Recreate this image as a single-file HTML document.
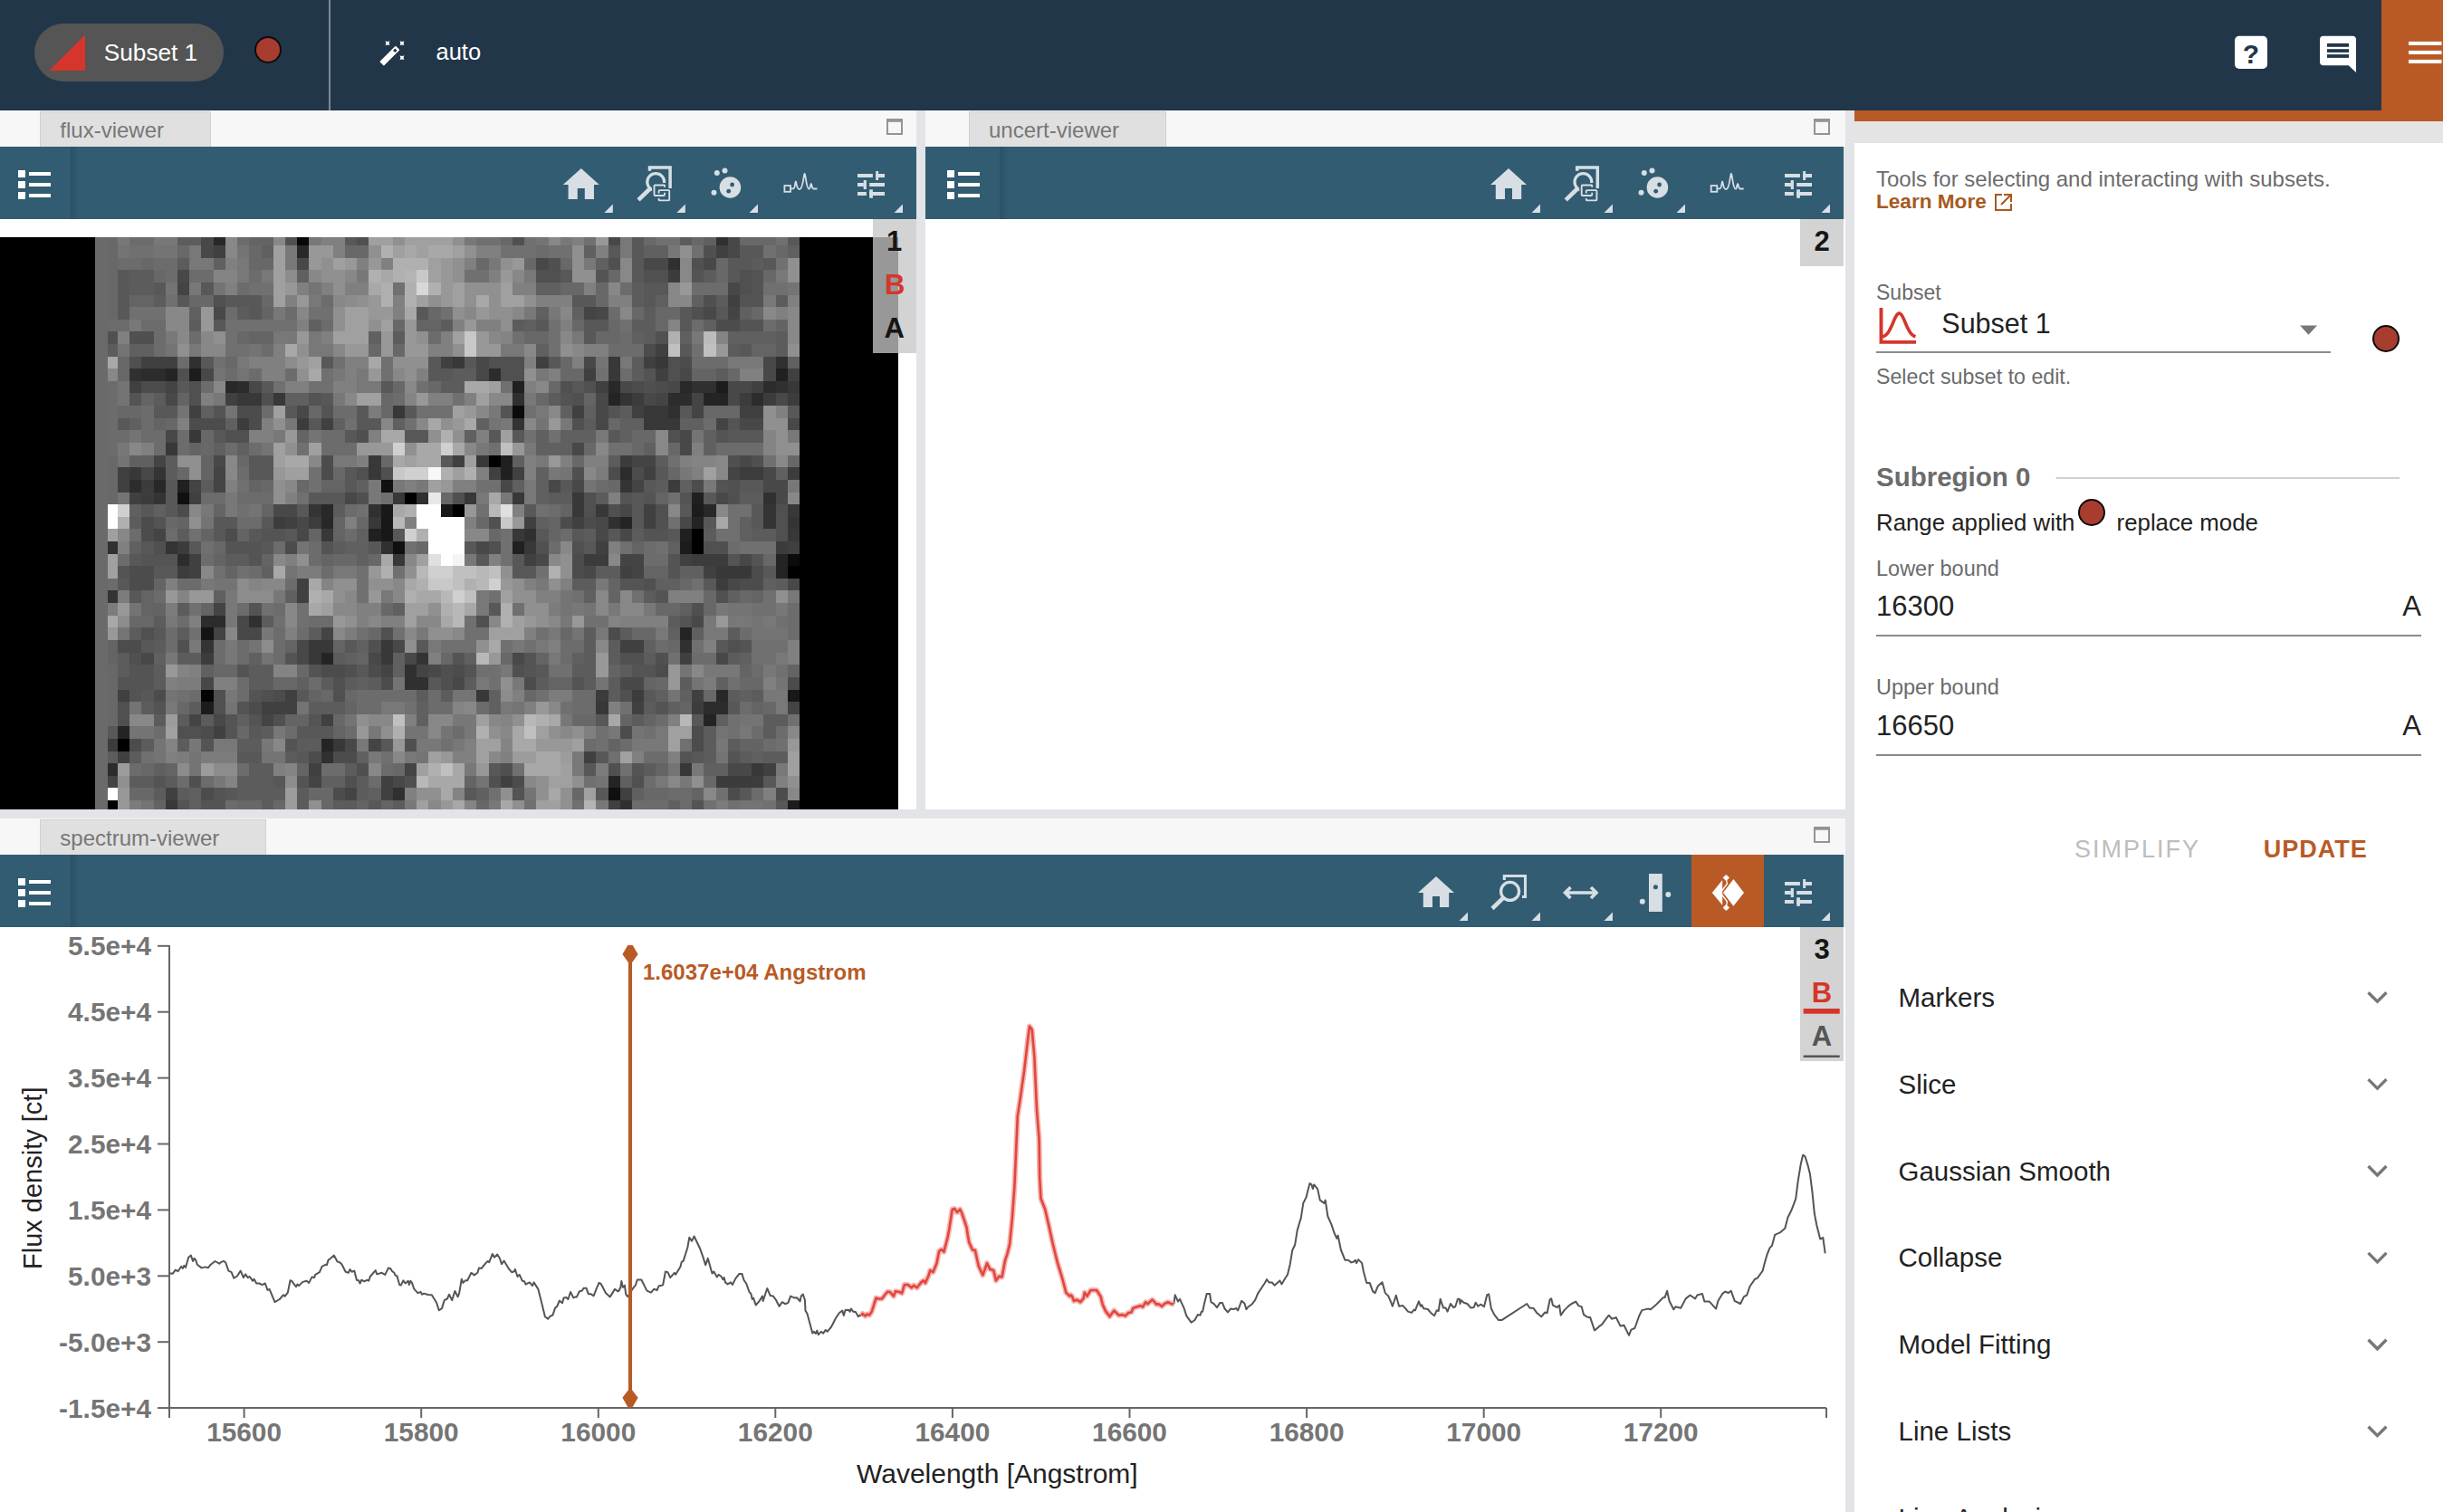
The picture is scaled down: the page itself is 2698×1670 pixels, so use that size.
<!DOCTYPE html>
<html><head><meta charset="utf-8">
<style>
*{margin:0;padding:0;box-sizing:border-box}
html,body{width:2698px;height:1670px;overflow:hidden;background:#fff;font-family:"Liberation Sans",sans-serif}
.a{position:absolute}
.tabrow{background:#f7f7f7}
.tab{background:#e0e0e0;border:1px solid #d0d0d0;border-bottom:none}
.tb{background:#315c72}
.gap{background:#e2e4e8}
.shadow{width:9px;height:80px;background:linear-gradient(to right,rgba(0,0,0,0.13),rgba(0,0,0,0))}
svg text{font-family:"Liberation Sans",sans-serif}
</style></head><body>

<!-- top bar -->
<div class="a" style="left:0;top:0;width:2698px;height:122px;background:#22364a"></div>
<div class="a" style="left:38px;top:26px;width:209px;height:64px;border-radius:32px;background:#555"></div>
<div class="a" style="left:281px;top:39.5px;width:30px;height:30px;border-radius:50%;background:#a83c2e;border:2px solid #0c0c0c"></div>
<div class="a" style="left:363px;top:0;width:2px;height:122px;background:#7b8896"></div>
<div class="a" style="left:2630px;top:0;width:68px;height:122px;background:#b95a26"></div>
<div class="a" style="left:2048px;top:122px;width:650px;height:12px;background:#b95a26"></div>

<!-- viewers background -->
<div class="a gap" style="left:0;top:122px;width:2048px;height:1548px"></div>

<!-- flux viewer -->
<div class="a tabrow" style="left:0;top:122px;width:1012px;height:40px"></div>
<div class="a tab" style="left:44px;top:122.5px;width:189px;height:39.5px"></div>
<div class="a tb" style="left:0;top:162px;width:1012px;height:80px"></div>
<div class="a shadow" style="left:78px;top:162px"></div>
<div class="a" style="left:0;top:242px;width:1012px;height:652px;background:#fff"></div>
<div class="a" style="left:0;top:262px;width:992px;height:632px;background:#000"></div>
<svg class="a" style="left:105px;top:262px" width="778" height="632" shape-rendering="crispEdges">
<rect x="0" y="0" width="14" height="632" fill="#6a6a6a"/>
<path fill="#000000" d="M435 241h13v13h-13zM342 282h13v13h-13zM395 295h13v14h-13zM659 322h13v14h-13zM659 336h13v14h-13zM765 363h13v14h-13zM25 554h13v14h-13zM14 622h11v10h-11z"/>
<path fill="#040404" d="M117 500h14v13h-14z"/>
<path fill="#080808" d="M223 0h13v9h-13z"/>
<path fill="#0c0c0c" d="M461 186h13v14h-13zM765 350h13v13h-13z"/>
<path fill="#101010" d="M316 268h13v14h-13zM91 282h13v13h-13zM329 336h13v14h-13zM567 608h13v14h-13z"/>
<path fill="#141414" d="M117 431h14v14h-14z"/>
<path fill="#181818" d="M316 295h13v14h-13zM382 295h13v14h-13zM316 309h13v13h-13zM316 322h13v14h-13zM765 500h13v13h-13z"/>
<path fill="#1c1c1c" d="M104 145h13v14h-13zM686 159h13v13h-13zM659 295h13v14h-13zM646 336h13v14h-13zM117 513h14v14h-14zM765 622h13v10h-13z"/>
<path fill="#202020" d="M752 145h13v14h-13zM461 159h13v13h-13zM448 241h13v13h-13zM448 254h13v14h-13zM91 268h13v14h-13zM659 282h13v13h-13zM302 322h14v14h-14zM646 322h13v14h-13zM461 336h13v14h-13z"/>
<path fill="#242424" d="M78 145h13v14h-13zM567 172h13v14h-13zM672 172h14v14h-14zM686 172h13v14h-13zM580 309h13v13h-13zM659 309h13v13h-13zM752 350h13v13h-13zM752 363h13v14h-13zM646 431h13v14h-13zM250 459h13v13h-13zM672 527h14v13h-14zM25 540h13v14h-13zM250 554h13v14h-13zM567 595h13v13h-13z"/>
<path fill="#282828" d="M131 0h13v9h-13zM223 9h13v14h-13zM144 159h13v13h-13zM567 159h13v13h-13zM646 159h13v13h-13zM65 268h13v14h-13zM250 295h13v14h-13zM672 295h14v14h-14zM250 309h13v13h-13zM686 500h13v13h-13z"/>
<path fill="#2c2c2c" d="M51 145h14v14h-14zM65 145h13v14h-13zM435 145h13v14h-13zM157 159h13v13h-13zM738 159h14v13h-14zM633 172h13v14h-13zM646 172h13v14h-13zM725 172h13v14h-13zM580 254h13v14h-13zM38 268h13v14h-13zM91 350h13v13h-13zM117 418h14v13h-14zM131 418h13v13h-13zM672 513h14v14h-14zM686 513h13v14h-13zM14 581h11v14h-11z"/>
<path fill="#303030" d="M686 0h13v9h-13zM633 23h13v13h-13zM104 132h13v13h-13zM752 132h13v13h-13zM38 145h13v14h-13zM659 159h13v13h-13zM672 159h14v13h-14zM752 159h13v13h-13zM461 172h13v14h-13zM633 186h13v14h-13zM355 282h13v13h-13zM738 282h14v13h-14zM302 295h14v14h-14zM567 309h13v13h-13zM474 322h13v14h-13zM14 336h11v14h-11zM316 336h13v14h-13zM170 418h14v13h-14zM646 445h13v14h-13zM342 472h13v14h-13zM342 486h13v14h-13zM355 486h13v14h-13zM250 568h13v13h-13zM329 608h13v14h-13zM580 622h13v10h-13z"/>
<path fill="#343434" d="M580 172h13v14h-13zM461 200h13v13h-13zM65 254h13v14h-13zM580 268h13v14h-13zM65 282h13v13h-13zM236 295h14v14h-14zM738 295h14v14h-14zM738 309h14v13h-14zM765 309h13v13h-13zM78 336h13v14h-13zM14 390h11v14h-11zM117 445h14v14h-14zM355 459h13v13h-13z"/>
<path fill="#383838" d="M395 132h13v13h-13zM567 132h13v13h-13zM619 132h14v13h-14zM567 145h13v14h-13zM765 159h13v13h-13zM157 172h13v14h-13zM170 172h14v14h-14zM197 172h13v14h-13zM329 186h13v14h-13zM606 186h13v14h-13zM619 186h14v14h-14zM606 200h13v13h-13zM619 200h14v13h-14zM633 200h13v13h-13zM104 213h13v14h-13zM78 227h13v14h-13zM302 241h14v13h-14zM421 241h14v13h-14zM38 254h13v14h-13zM302 254h14v14h-14zM329 282h13v13h-13zM408 282h13v13h-13zM461 282h13v13h-13zM527 282h13v13h-13zM527 295h13v14h-13zM553 295h14v14h-14zM765 295h13v14h-13zM302 309h14v13h-14zM250 322h13v14h-13zM461 322h13v14h-13zM765 322h13v14h-13zM474 336h13v14h-13zM329 350h13v13h-13zM686 363h13v14h-13zM699 363h13v14h-13zM712 363h13v14h-13zM236 445h14v14h-14zM250 445h13v14h-13zM316 445h13v14h-13zM236 459h14v13h-14zM316 459h13v13h-13zM421 500h14v13h-14zM553 513h14v14h-14zM263 554h13v14h-13zM646 581h13v14h-13zM725 581h13v14h-13zM78 622h13v10h-13z"/>
<path fill="#3c3c3c" d="M633 36h13v14h-13zM593 172h13v14h-13zM712 172h13v14h-13zM738 172h14v14h-14zM765 172h13v14h-13zM157 200h13v13h-13zM223 200h13v13h-13zM580 241h13v13h-13zM712 254h13v14h-13zM725 254h13v14h-13zM765 254h13v14h-13zM51 268h14v14h-14zM633 268h13v14h-13zM51 282h14v13h-14zM197 309h13v13h-13zM236 309h14v13h-14zM91 336h13v14h-13zM752 336h13v14h-13zM540 350h13v13h-13zM553 350h14v13h-14zM659 350h13v13h-13zM672 350h14v13h-14zM686 350h13v13h-13zM91 363h13v14h-13zM686 377h13v13h-13zM117 459h14v13h-14zM553 500h14v13h-14zM593 500h13v13h-13zM659 513h13v14h-13zM14 554h11v14h-11zM686 595h13v13h-13zM699 595h13v13h-13zM712 595h13v13h-13zM725 595h13v13h-13z"/>
<path fill="#404040" d="M131 9h13v14h-13zM686 9h13v14h-13zM699 64h13v13h-13zM619 118h14v14h-14zM51 132h14v13h-14zM65 132h13v13h-13zM78 132h13v13h-13zM382 132h13v13h-13zM487 132h14v13h-14zM606 132h13v13h-13zM540 145h13v14h-13zM619 145h14v14h-14zM765 145h13v14h-13zM38 159h13v13h-13zM553 159h14v13h-14zM725 159h13v13h-13zM144 172h13v14h-13zM104 186h13v14h-13zM527 186h13v14h-13zM593 186h13v14h-13zM712 186h13v14h-13zM725 186h13v14h-13zM250 200h13v13h-13zM395 241h13v13h-13zM25 254h13v14h-13zM435 254h13v14h-13zM461 254h13v14h-13zM606 254h13v14h-13zM25 268h13v14h-13zM38 282h13v13h-13zM104 282h13v13h-13zM606 295h13v14h-13zM210 309h13v13h-13zM474 309h13v13h-13zM527 309h13v13h-13zM606 309h13v13h-13zM553 336h14v14h-14zM765 336h13v14h-13zM104 350h13v13h-13zM474 350h13v13h-13zM646 350h13v13h-13zM104 363h13v14h-13zM580 363h13v14h-13zM672 363h14v14h-14zM223 377h13v13h-13zM223 390h13v14h-13zM580 445h13v14h-13zM593 445h13v14h-13zM646 459h13v13h-13zM25 500h13v13h-13zM210 500h13v13h-13zM659 500h13v13h-13zM184 513h13v14h-13zM197 513h13v14h-13zM210 513h13v14h-13zM593 513h13v14h-13zM250 527h13v13h-13zM131 540h13v14h-13zM25 568h13v13h-13zM540 568h13v13h-13zM236 581h14v14h-14zM738 581h14v14h-14zM316 595h13v13h-13zM448 595h13v13h-13zM78 608h13v14h-13zM316 608h13v14h-13zM580 608h13v14h-13zM567 622h13v10h-13z"/>
<path fill="#444444" d="M91 50h13v14h-13zM540 77h13v14h-13zM699 77h13v14h-13zM78 159h13v13h-13zM619 172h14v14h-14zM659 172h13v14h-13zM659 186h13v14h-13zM686 200h13v13h-13zM65 241h13v13h-13zM593 241h13v13h-13zM606 241h13v13h-13zM131 254h13v14h-13zM699 254h13v14h-13zM104 268h13v14h-13zM131 268h13v14h-13zM593 268h13v14h-13zM65 322h13v14h-13zM580 350h13v13h-13zM593 350h13v13h-13zM593 363h13v14h-13zM131 404h13v14h-13zM131 431h13v14h-13zM250 431h13v14h-13zM316 472h13v14h-13zM355 472h13v14h-13zM765 513h13v14h-13zM104 527h13v13h-13zM184 527h13v13h-13zM302 554h14v14h-14zM342 581h13v14h-13zM14 595h11v13h-11zM236 595h14v13h-14zM276 608h13v14h-13z"/>
<path fill="#484848" d="M117 0h14v9h-14zM567 0h13v9h-13zM699 0h13v9h-13zM117 9h14v14h-14zM699 9h13v14h-13zM223 23h13v13h-13zM487 23h14v13h-14zM606 23h13v13h-13zM619 23h14v13h-14zM672 23h14v13h-14zM91 36h13v14h-13zM699 50h13v14h-13zM131 77h13v14h-13zM553 77h14v14h-14zM672 77h14v14h-14zM421 132h14v13h-14zM540 132h13v13h-13zM738 132h14v13h-14zM117 145h14v14h-14zM421 145h14v14h-14zM646 145h13v14h-13zM738 145h14v14h-14zM170 159h14v13h-14zM580 159h13v13h-13zM633 159h13v13h-13zM699 159h13v13h-13zM712 159h13v13h-13zM78 172h13v14h-13zM553 172h14v14h-14zM606 172h13v14h-13zM699 172h13v14h-13zM752 172h13v14h-13zM223 186h13v14h-13zM553 186h14v14h-14zM553 200h14v13h-14zM712 200h13v13h-13zM725 200h13v13h-13zM765 200h13v13h-13zM78 213h13v14h-13zM646 213h13v14h-13zM527 227h13v14h-13zM646 227h13v14h-13zM131 241h13v13h-13zM712 241h13v13h-13zM51 254h14v14h-14zM738 254h14v14h-14zM448 268h13v14h-13zM501 268h13v14h-13zM527 268h13v14h-13zM738 268h14v14h-14zM752 268h13v14h-13zM276 282h13v13h-13zM686 282h13v13h-13zM752 282h13v13h-13zM197 295h13v14h-13zM210 295h13v14h-13zM580 295h13v14h-13zM223 309h13v13h-13zM553 309h14v13h-14zM646 309h13v13h-13zM223 322h13v14h-13zM553 322h14v14h-14zM580 322h13v14h-13zM421 336h14v14h-14zM487 350h14v13h-14zM712 350h13v13h-13zM540 363h13v14h-13zM699 377h13v13h-13zM765 377h13v13h-13zM157 418h13v13h-13zM659 418h13v13h-13zM157 431h13v14h-13zM170 431h14v14h-14zM223 445h13v14h-13zM329 445h13v14h-13zM51 459h14v13h-14zM223 459h13v13h-13zM302 459h14v13h-14zM342 459h13v13h-13zM461 459h13v13h-13zM686 459h13v13h-13zM368 472h14v14h-14zM117 486h14v14h-14zM395 486h13v14h-13zM580 486h13v14h-13zM593 486h13v14h-13zM131 527h13v13h-13zM276 554h13v14h-13zM699 581h13v14h-13zM712 581h13v14h-13zM329 595h13v13h-13z"/>
<path fill="#4c4c4c" d="M686 91h13v13h-13zM699 91h13v13h-13zM606 118h13v14h-13zM646 132h13v13h-13zM51 159h14v13h-14zM65 159h13v13h-13zM593 159h13v13h-13zM619 159h14v13h-14zM157 186h13v14h-13zM170 186h14v14h-14zM104 200h13v13h-13zM117 200h14v13h-14zM131 200h13v13h-13zM170 200h14v13h-14zM250 241h13v13h-13zM250 254h13v14h-13zM567 254h13v14h-13zM593 254h13v14h-13zM659 268h13v14h-13zM91 295h13v14h-13zM51 309h14v13h-14zM514 309h13v13h-13zM540 309h13v13h-13zM51 322h14v14h-14zM144 322h13v14h-13zM210 336h13v14h-13zM527 350h13v13h-13zM38 363h13v14h-13zM51 363h14v14h-14zM527 363h13v14h-13zM725 363h13v14h-13zM38 377h13v13h-13zM51 377h14v13h-14zM712 377h13v13h-13zM725 377h13v13h-13zM567 431h13v14h-13zM25 445h13v14h-13zM38 445h13v14h-13zM250 472h13v14h-13zM263 472h13v14h-13zM302 472h14v14h-14zM395 472h13v14h-13zM619 472h14v14h-14zM316 486h13v14h-13zM474 486h13v14h-13zM765 486h13v14h-13zM65 500h13v13h-13zM197 500h13v13h-13zM170 513h14v14h-14zM117 540h14v14h-14zM580 540h13v14h-13zM659 540h13v14h-13zM38 554h13v14h-13zM659 554h13v14h-13zM236 568h14v13h-14zM263 568h13v13h-13zM276 568h13v13h-13zM461 595h13v13h-13zM117 608h14v14h-14zM263 608h13v14h-13zM699 608h13v14h-13zM752 608h13v14h-13z"/>
<path fill="#505050" d="M210 0h13v9h-13zM289 0h13v9h-13zM461 0h13v9h-13zM672 9h14v14h-14zM501 23h13v13h-13zM567 23h13v13h-13zM659 23h13v13h-13zM487 36h14v14h-14zM501 36h13v14h-13zM606 36h13v14h-13zM619 36h14v14h-14zM712 36h13v14h-13zM712 50h13v14h-13zM131 64h13v13h-13zM672 64h14v13h-14zM659 77h13v14h-13zM14 104h11v14h-11zM38 104h13v14h-13zM51 104h14v14h-14zM619 104h14v14h-14zM38 132h13v13h-13zM435 132h13v13h-13zM448 132h13v13h-13zM461 132h13v13h-13zM633 132h13v13h-13zM91 145h13v14h-13zM448 145h13v14h-13zM461 145h13v14h-13zM633 145h13v14h-13zM104 159h13v13h-13zM514 159h13v13h-13zM540 159h13v13h-13zM606 159h13v13h-13zM104 172h13v14h-13zM184 172h13v14h-13zM527 172h13v14h-13zM527 200h13v13h-13zM144 213h13v14h-13zM157 213h13v14h-13zM289 213h13v14h-13zM633 213h13v14h-13zM699 241h13v13h-13zM725 241h13v13h-13zM289 254h13v14h-13zM316 254h13v14h-13zM527 254h13v14h-13zM699 268h13v14h-13zM289 282h13v13h-13zM395 282h13v13h-13zM540 282h13v13h-13zM699 282h13v13h-13zM540 295h13v14h-13zM567 295h13v14h-13zM619 295h14v14h-14zM752 295h13v14h-13zM435 309h13v13h-13zM619 309h14v13h-14zM752 309h13v13h-13zM752 322h13v14h-13zM65 336h13v14h-13zM435 336h13v14h-13zM487 336h14v14h-14zM527 336h13v14h-13zM672 336h14v14h-14zM686 336h13v14h-13zM606 377h13v13h-13zM686 390h13v14h-13zM659 404h13v14h-13zM421 418h14v13h-14zM51 431h14v14h-14zM316 431h13v14h-13zM91 445h13v14h-13zM302 445h14v14h-14zM699 445h13v14h-13zM38 459h13v13h-13zM580 459h13v13h-13zM593 459h13v13h-13zM619 459h14v13h-14zM276 472h13v14h-13zM382 472h13v14h-13zM461 472h13v14h-13zM263 486h13v14h-13zM382 486h13v14h-13zM131 500h13v13h-13zM184 500h13v13h-13zM263 500h13v13h-13zM580 500h13v13h-13zM25 513h13v14h-13zM131 513h13v14h-13zM25 527h13v13h-13zM197 527h13v13h-13zM91 540h13v14h-13zM104 540h13v14h-13zM342 554h13v14h-13zM289 581h13v14h-13zM448 581h13v14h-13zM567 581h13v14h-13zM104 595h13v13h-13zM276 595h13v13h-13zM342 595h13v13h-13zM435 595h13v13h-13zM593 595h13v13h-13z"/>
<path fill="#545454" d="M553 36h14v14h-14zM659 36h13v14h-13zM725 36h13v14h-13zM725 50h13v14h-13zM712 64h13v13h-13zM725 64h13v13h-13zM712 91h13v13h-13zM725 91h13v13h-13zM606 145h13v14h-13zM38 172h13v14h-13zM236 172h14v14h-14zM514 172h13v14h-13zM131 186h13v14h-13zM250 186h13v14h-13zM448 186h13v14h-13zM567 186h13v14h-13zM699 200h13v13h-13zM686 213h13v14h-13zM686 268h13v14h-13zM580 282h13v13h-13zM606 282h13v13h-13zM646 282h13v13h-13zM65 309h13v13h-13zM184 322h13v14h-13zM197 322h13v14h-13zM606 322h13v14h-13zM619 322h14v14h-14zM144 336h13v14h-13zM157 336h13v14h-13zM170 336h14v14h-14zM250 336h13v14h-13zM51 350h14v13h-14zM65 350h13v13h-13zM78 350h13v13h-13zM170 350h14v13h-14zM633 350h13v13h-13zM699 350h13v13h-13zM725 350h13v13h-13zM25 363h13v14h-13zM633 363h13v14h-13zM580 377h13v13h-13zM593 377h13v13h-13zM619 390h14v14h-14zM170 404h14v14h-14zM646 418h13v13h-13zM712 445h13v14h-13zM210 459h13v13h-13zM395 459h13v13h-13zM474 459h13v13h-13zM38 472h13v14h-13zM51 472h14v14h-14zM157 472h13v14h-13zM236 472h14v14h-14zM408 472h13v14h-13zM474 472h13v14h-13zM593 472h13v14h-13zM606 472h13v14h-13zM25 486h13v14h-13zM38 486h13v14h-13zM51 486h14v14h-14zM527 486h13v14h-13zM38 500h13v13h-13zM170 500h14v13h-14zM65 513h13v14h-13zM157 513h13v14h-13zM619 513h14v14h-14zM144 527h13v13h-13zM170 527h14v13h-14zM236 527h14v13h-14zM144 540h13v14h-13zM117 554h14v14h-14zM210 554h13v14h-13zM646 568h13v13h-13zM699 568h13v13h-13zM593 581h13v14h-13zM65 595h13v13h-13zM223 595h13v13h-13zM131 608h13v14h-13zM461 608h13v14h-13zM91 622h13v10h-13zM117 622h14v10h-14zM131 622h13v10h-13zM659 622h13v10h-13z"/>
<path fill="#585858" d="M276 0h13v9h-13zM593 0h13v9h-13zM765 0h13v9h-13zM567 9h13v14h-13zM593 9h13v14h-13zM712 9h13v14h-13zM725 9h13v14h-13zM593 23h13v13h-13zM699 23h13v13h-13zM712 23h13v13h-13zM738 23h14v13h-14zM25 36h13v14h-13zM514 36h13v14h-13zM593 36h13v14h-13zM699 36h13v14h-13zM25 50h13v14h-13zM65 50h13v14h-13zM117 50h14v14h-14zM606 50h13v14h-13zM619 50h14v14h-14zM25 64h13v13h-13zM91 64h13v13h-13zM144 64h13v13h-13zM157 64h13v13h-13zM170 64h14v13h-14zM527 64h13v13h-13zM540 64h13v13h-13zM606 64h13v13h-13zM25 77h13v14h-13zM170 77h14v14h-14zM355 77h13v14h-13zM646 77h13v14h-13zM686 77h13v14h-13zM131 91h13v13h-13zM487 91h14v13h-14zM540 91h13v13h-13zM553 91h14v13h-14zM646 91h13v13h-13zM540 104h13v14h-13zM646 118h13v14h-13zM712 118h13v14h-13zM117 132h14v13h-14zM250 132h13v13h-13zM368 132h14v13h-14zM408 132h13v13h-13zM501 132h13v13h-13zM368 145h14v14h-14zM382 145h13v14h-13zM91 159h13v13h-13zM184 159h13v13h-13zM316 159h13v13h-13zM527 159h13v13h-13zM250 172h13v14h-13zM65 186h13v14h-13zM78 186h13v14h-13zM210 186h13v14h-13zM289 186h13v14h-13zM342 186h13v14h-13zM646 186h13v14h-13zM765 186h13v14h-13zM25 200h13v13h-13zM236 200h14v13h-14zM289 200h13v13h-13zM302 200h14v13h-14zM131 213h13v14h-13zM276 213h13v14h-13zM342 213h13v14h-13zM355 213h13v14h-13zM435 213h13v14h-13zM461 213h13v14h-13zM567 213h13v14h-13zM699 213h13v14h-13zM712 213h13v14h-13zM725 213h13v14h-13zM170 241h14v13h-14zM184 241h13v13h-13zM382 241h13v13h-13zM170 254h14v14h-14zM184 254h13v14h-13zM276 254h13v14h-13zM619 254h14v14h-14zM78 268h13v14h-13zM276 268h13v14h-13zM514 268h13v14h-13zM606 268h13v14h-13zM712 268h13v14h-13zM725 268h13v14h-13zM78 282h13v13h-13zM236 282h14v13h-14zM250 282h13v13h-13zM263 282h13v13h-13zM593 282h13v13h-13zM672 282h14v13h-14zM51 295h14v14h-14zM78 295h13v14h-13zM223 295h13v14h-13zM474 295h13v14h-13zM593 295h13v14h-13zM646 295h13v14h-13zM725 295h13v14h-13zM131 309h13v13h-13zM144 309h13v13h-13zM184 309h13v13h-13zM593 309h13v13h-13zM672 309h14v13h-14zM725 309h13v13h-13zM131 322h13v14h-13zM170 322h14v14h-14zM210 322h13v14h-13zM329 322h13v14h-13zM487 322h14v14h-14zM527 322h13v14h-13zM567 322h13v14h-13zM633 322h13v14h-13zM51 336h14v14h-14zM104 336h13v14h-13zM184 336h13v14h-13zM302 336h14v14h-14zM408 336h13v14h-13zM540 336h13v14h-13zM38 350h13v13h-13zM421 350h14v13h-14zM461 350h13v13h-13zM65 363h13v14h-13zM78 363h13v14h-13zM461 363h13v14h-13zM474 363h13v14h-13zM738 363h14v14h-14zM25 377h13v13h-13zM672 377h14v13h-14zM38 390h13v14h-13zM435 404h13v14h-13zM65 431h13v14h-13zM51 445h14v14h-14zM276 445h13v14h-13zM355 445h13v14h-13zM686 445h13v14h-13zM289 472h13v14h-13zM487 472h14v14h-14zM368 486h14v14h-14zM51 500h14v13h-14zM223 500h13v13h-13zM606 500h13v13h-13zM699 513h13v14h-13zM553 527h14v13h-14zM659 527h13v13h-13zM14 540h11v14h-11zM170 540h14v14h-14zM223 540h13v14h-13zM236 540h14v14h-14zM250 540h13v14h-13zM316 554h13v14h-13zM157 568h13v13h-13zM170 568h14v13h-14zM223 568h13v13h-13zM553 568h14v13h-14zM659 568h13v13h-13zM435 581h13v14h-13zM540 581h13v14h-13zM197 595h13v13h-13zM738 595h14v13h-14zM144 608h13v14h-13zM408 608h13v14h-13zM553 608h14v14h-14zM712 608h13v14h-13zM302 622h14v10h-14zM752 622h13v10h-13z"/>
<path fill="#5c5c5c" d="M91 0h13v9h-13zM104 0h13v9h-13zM646 0h13v9h-13zM91 23h13v13h-13zM725 23h13v13h-13zM38 36h13v14h-13zM51 36h14v14h-14zM672 36h14v14h-14zM38 50h13v14h-13zM51 50h14v14h-14zM593 50h13v14h-13zM65 64h13v13h-13zM593 64h13v13h-13zM686 64h13v13h-13zM752 64h13v13h-13zM157 77h13v14h-13zM606 77h13v14h-13zM104 91h13v13h-13zM382 91h13v13h-13zM461 91h13v13h-13zM593 91h13v13h-13zM606 91h13v13h-13zM329 104h13v14h-13zM606 104h13v14h-13zM752 104h13v14h-13zM14 118h11v14h-11zM699 118h13v14h-13zM752 118h13v14h-13zM593 132h13v13h-13zM395 145h13v14h-13zM408 145h13v14h-13zM593 145h13v14h-13zM686 145h13v14h-13zM382 159h13v13h-13zM395 159h13v13h-13zM65 172h13v14h-13zM501 172h13v14h-13zM580 186h13v14h-13zM540 200h13v13h-13zM78 241h13v13h-13zM567 241h13v13h-13zM619 241h14v13h-14zM78 254h13v14h-13zM117 268h14v14h-14zM619 268h14v14h-14zM501 282h13v13h-13zM514 282h13v13h-13zM553 282h14v13h-14zM712 282h13v13h-13zM725 282h13v13h-13zM263 295h13v14h-13zM38 309h13v13h-13zM91 322h13v14h-13zM540 322h13v14h-13zM593 322h13v14h-13zM672 322h14v14h-14zM725 322h13v14h-13zM738 322h14v14h-14zM263 336h13v14h-13zM144 350h13v13h-13zM157 350h13v13h-13zM553 363h14v14h-14zM567 363h13v14h-13zM527 377h13v13h-13zM540 377h13v13h-13zM752 377h13v13h-13zM606 390h13v14h-13zM91 404h13v14h-13zM65 418h13v13h-13zM184 418h13v13h-13zM633 418h13v13h-13zM38 431h13v14h-13zM91 431h13v14h-13zM236 431h14v14h-14zM540 431h13v14h-13zM580 431h13v14h-13zM699 431h13v14h-13zM65 445h13v14h-13zM540 445h13v14h-13zM567 445h13v14h-13zM25 459h13v13h-13zM91 459h13v13h-13zM104 459h13v13h-13zM263 459h13v13h-13zM540 459h13v13h-13zM567 459h13v13h-13zM606 459h13v13h-13zM699 459h13v13h-13zM25 472h13v14h-13zM65 472h13v14h-13zM170 472h14v14h-14zM184 472h13v14h-13zM527 472h13v14h-13zM540 472h13v14h-13zM580 472h13v14h-13zM65 486h13v14h-13zM170 486h14v14h-14zM184 486h13v14h-13zM250 486h13v14h-13zM276 486h13v14h-13zM302 486h14v14h-14zM408 486h13v14h-13zM487 486h14v14h-14zM540 486h13v14h-13zM567 486h13v14h-13zM646 486h13v14h-13zM355 500h13v13h-13zM382 500h13v13h-13zM567 500h13v13h-13zM699 500h13v13h-13zM725 500h13v13h-13zM51 513h14v14h-14zM104 513h13v14h-13zM236 513h14v14h-14zM250 513h13v14h-13zM263 513h13v14h-13zM606 513h13v14h-13zM65 527h13v13h-13zM91 527h13v13h-13zM117 527h14v13h-14zM593 527h13v13h-13zM738 527h14v13h-14zM752 527h13v13h-13zM184 540h13v14h-13zM672 540h14v14h-14zM738 540h14v14h-14zM51 554h14v14h-14zM91 554h13v14h-13zM157 554h13v14h-13zM170 554h14v14h-14zM223 554h13v14h-13zM236 554h14v14h-14zM672 554h14v14h-14zM699 554h13v14h-13zM14 568h11v13h-11zM38 568h13v13h-13zM210 568h13v13h-13zM672 568h14v13h-14zM712 568h13v13h-13zM738 568h14v13h-14zM752 568h13v13h-13zM170 581h14v14h-14zM184 581h13v14h-13zM276 581h13v14h-13zM606 581h13v14h-13zM38 595h13v13h-13zM51 595h14v13h-14zM78 595h13v13h-13zM157 595h13v13h-13zM170 595h14v13h-14zM184 595h13v13h-13zM289 595h13v13h-13zM65 608h13v14h-13zM91 608h13v14h-13zM157 608h13v14h-13zM170 608h14v14h-14zM184 608h13v14h-13zM197 608h13v14h-13zM223 608h13v14h-13zM289 608h13v14h-13zM184 622h13v10h-13zM223 622h13v10h-13zM263 622h13v10h-13zM276 622h13v10h-13zM329 622h13v10h-13z"/>
<path fill="#606060" d="M672 0h14v9h-14zM184 9h13v14h-13zM540 9h13v14h-13zM606 9h13v14h-13zM619 9h14v14h-14zM765 9h13v14h-13zM131 23h13v13h-13zM553 23h14v13h-14zM223 36h13v14h-13zM487 50h14v14h-14zM501 50h13v14h-13zM619 64h14v13h-14zM659 64h13v13h-13zM104 77h13v14h-13zM487 77h14v14h-14zM527 77h13v14h-13zM712 77h13v14h-13zM236 91h14v13h-14zM474 91h13v13h-13zM672 91h14v13h-14zM302 104h14v14h-14zM593 104h13v14h-13zM646 104h13v14h-13zM699 104h13v14h-13zM712 104h13v14h-13zM725 104h13v14h-13zM738 104h14v14h-14zM38 118h13v14h-13zM51 118h14v14h-14zM487 118h14v14h-14zM765 132h13v13h-13zM210 172h13v14h-13zM223 172h13v14h-13zM117 186h14v14h-14zM514 186h13v14h-13zM540 186h13v14h-13zM38 200h13v13h-13zM144 200h13v13h-13zM263 200h13v13h-13zM329 200h13v13h-13zM421 200h14v13h-14zM580 200h13v13h-13zM593 200h13v13h-13zM646 200h13v13h-13zM659 200h13v13h-13zM408 213h13v14h-13zM487 213h14v14h-14zM514 213h13v14h-13zM527 213h13v14h-13zM540 213h13v14h-13zM580 213h13v14h-13zM672 213h14v14h-14zM131 227h13v14h-13zM157 227h13v14h-13zM487 227h14v14h-14zM501 227h13v14h-13zM514 227h13v14h-13zM606 227h13v14h-13zM672 227h14v14h-14zM38 241h13v13h-13zM51 241h14v13h-14zM461 241h13v13h-13zM487 254h14v14h-14zM752 254h13v14h-13zM289 268h13v14h-13zM461 268h13v14h-13zM487 268h14v14h-14zM646 268h13v14h-13zM487 282h14v13h-14zM38 295h13v14h-13zM65 295h13v14h-13zM487 309h14v13h-14zM712 309h13v13h-13zM289 322h13v14h-13zM712 322h13v14h-13zM38 336h13v14h-13zM276 336h13v14h-13zM289 336h13v14h-13zM633 336h13v14h-13zM289 350h13v13h-13zM184 363h13v14h-13zM646 363h13v14h-13zM659 363h13v14h-13zM619 377h14v13h-14zM633 377h13v13h-13zM738 377h14v13h-14zM131 390h13v14h-13zM210 390h13v14h-13zM540 390h13v14h-13zM699 390h13v14h-13zM329 404h13v14h-13zM646 404h13v14h-13zM633 431h13v14h-13zM659 431h13v14h-13zM289 445h13v14h-13zM606 445h13v14h-13zM65 459h13v13h-13zM170 459h14v13h-14zM276 459h13v13h-13zM329 459h13v13h-13zM408 459h13v13h-13zM527 459h13v13h-13zM712 459h13v13h-13zM117 472h14v14h-14zM329 472h13v14h-13zM223 486h13v14h-13zM289 486h13v14h-13zM686 486h13v14h-13zM435 500h13v13h-13zM619 500h14v13h-14zM646 500h13v13h-13zM712 500h13v13h-13zM355 513h13v14h-13zM435 513h13v14h-13zM633 513h13v14h-13zM157 527h13v13h-13zM355 527h13v13h-13zM686 527h13v13h-13zM289 568h13v13h-13zM725 568h13v13h-13zM65 581h13v14h-13zM672 581h14v14h-14zM686 581h13v14h-13zM250 595h13v13h-13zM263 595h13v13h-13zM580 595h13v13h-13zM104 608h13v14h-13zM302 608h14v14h-14zM421 608h14v14h-14zM593 608h13v14h-13zM104 622h13v10h-13zM633 622h13v10h-13z"/>
<path fill="#646464" d="M170 0h14v9h-14zM184 0h13v9h-13zM38 64h13v13h-13zM51 64h14v13h-14zM184 77h13v14h-13zM355 91h13v13h-13zM368 91h14v13h-14zM752 91h13v13h-13zM170 104h14v14h-14zM184 104h13v14h-13zM725 118h13v14h-13zM738 118h14v14h-14zM659 145h13v14h-13zM672 145h14v14h-14zM51 172h14v14h-14zM91 172h13v14h-13zM540 172h13v14h-13zM65 200h13v13h-13zM223 213h13v14h-13zM104 227h13v14h-13zM117 241h14v13h-14zM117 254h14v14h-14zM170 268h14v14h-14zM250 268h13v14h-13zM263 268h13v14h-13zM619 282h14v13h-14zM131 295h13v14h-13zM184 295h13v14h-13zM514 295h13v14h-13zM91 309h13v13h-13zM263 309h13v13h-13zM501 309h13v13h-13zM117 322h14v14h-14zM157 322h13v14h-13zM236 322h14v14h-14zM263 322h13v14h-13zM501 322h13v14h-13zM593 336h13v14h-13zM131 350h13v13h-13zM184 350h13v13h-13zM250 350h13v13h-13zM144 363h13v14h-13zM606 363h13v14h-13zM619 363h14v14h-14zM65 377h13v13h-13zM567 377h13v13h-13zM51 390h14v14h-14zM567 390h13v14h-13zM725 390h13v14h-13zM51 404h14v14h-14zM65 404h13v14h-13zM117 404h14v14h-14zM14 445h11v14h-11zM210 445h13v14h-13zM263 445h13v14h-13zM14 459h11v13h-11zM289 459h13v13h-13zM487 459h14v13h-14zM567 472h13v14h-13zM712 472h13v14h-13zM765 472h13v14h-13zM501 486h13v14h-13zM514 486h13v14h-13zM606 486h13v14h-13zM236 500h14v13h-14zM276 513h13v14h-13zM646 513h13v14h-13zM725 513h13v14h-13zM210 527h13v13h-13zM223 527h13v13h-13zM580 527h13v13h-13zM606 527h13v13h-13zM263 540h13v14h-13zM567 554h13v14h-13zM712 554h13v14h-13zM725 554h13v14h-13zM78 581h13v14h-13zM223 581h13v14h-13zM619 581h14v14h-14zM408 595h13v13h-13zM659 608h13v14h-13zM65 622h13v10h-13zM289 622h13v10h-13zM316 622h13v10h-13z"/>
<path fill="#686868" d="M14 0h11v9h-11zM448 0h13v9h-13zM606 0h13v9h-13zM659 0h13v9h-13zM712 0h13v9h-13zM725 0h13v9h-13zM738 0h14v9h-14zM14 9h11v14h-11zM91 9h13v14h-13zM170 9h14v14h-14zM276 9h13v14h-13zM289 9h13v14h-13zM752 9h13v14h-13zM14 23h11v13h-11zM51 23h14v13h-14zM170 23h14v13h-14zM184 23h13v13h-13zM421 23h14v13h-14zM474 23h13v13h-13zM514 23h13v13h-13zM686 23h13v13h-13zM14 36h11v14h-11zM65 36h13v14h-13zM567 36h13v14h-13zM686 36h13v14h-13zM738 36h14v14h-14zM14 50h11v14h-11zM514 50h13v14h-13zM527 50h13v14h-13zM553 50h14v14h-14zM14 64h11v13h-11zM104 64h13v13h-13zM117 64h14v13h-14zM184 64h13v13h-13zM553 64h14v13h-14zM14 77h11v14h-11zM368 77h14v14h-14zM593 77h13v14h-13zM619 77h14v14h-14zM633 77h13v14h-13zM725 77h13v14h-13zM329 91h13v13h-13zM527 91h13v13h-13zM567 91h13v13h-13zM619 91h14v13h-14zM157 104h13v14h-13zM474 104h13v14h-13zM487 104h14v14h-14zM553 104h14v14h-14zM567 104h13v14h-13zM302 118h14v14h-14zM329 118h13v14h-13zM25 132h13v13h-13zM144 132h13v13h-13zM514 132h13v13h-13zM25 145h13v14h-13zM514 145h13v14h-13zM527 145h13v14h-13zM699 145h13v14h-13zM329 159h13v13h-13zM368 159h14v13h-14zM501 159h13v13h-13zM316 172h13v14h-13zM487 172h14v14h-14zM25 186h13v14h-13zM38 186h13v14h-13zM236 186h14v14h-14zM316 186h13v14h-13zM672 186h14v14h-14zM686 186h13v14h-13zM699 186h13v14h-13zM78 200h13v13h-13zM567 200h13v13h-13zM117 213h14v14h-14zM593 213h13v14h-13zM606 213h13v14h-13zM117 227h14v14h-14zM540 227h13v14h-13zM593 227h13v14h-13zM633 227h13v14h-13zM14 241h11v13h-11zM157 241h13v13h-13zM316 241h13v13h-13zM527 241h13v13h-13zM765 241h13v13h-13zM14 254h11v14h-11zM91 254h13v14h-13zM263 254h13v14h-13zM633 254h13v14h-13zM14 268h11v14h-11zM184 268h13v14h-13zM223 268h13v14h-13zM567 268h13v14h-13zM14 282h11v13h-11zM382 282h13v13h-13zM78 309h13v13h-13zM289 309h13v13h-13zM421 309h14v13h-14zM435 322h13v14h-13zM131 336h13v14h-13zM355 336h13v14h-13zM263 350h13v13h-13zM276 350h13v13h-13zM302 350h14v13h-14zM738 350h14v13h-14zM646 377h13v13h-13zM672 390h14v14h-14zM712 390h13v14h-13zM316 404h13v14h-13zM619 404h14v14h-14zM633 404h13v14h-13zM672 404h14v14h-14zM38 418h13v13h-13zM51 418h14v13h-14zM302 431h14v14h-14zM514 431h13v14h-13zM593 431h13v14h-13zM606 431h13v14h-13zM633 445h13v14h-13zM382 459h13v13h-13zM448 459h13v13h-13zM14 472h11v14h-11zM131 472h13v14h-13zM144 472h13v14h-13zM223 472h13v14h-13zM14 486h11v14h-11zM197 486h13v14h-13zM210 486h13v14h-13zM619 486h14v14h-14zM712 486h13v14h-13zM725 486h13v14h-13zM14 500h11v13h-11zM250 500h13v13h-13zM276 500h13v13h-13zM474 500h13v13h-13zM672 500h14v13h-14zM14 513h11v14h-11zM91 513h13v14h-13zM738 513h14v14h-14zM14 527h11v13h-11zM263 527h13v13h-13zM527 527h13v13h-13zM540 527h13v13h-13zM157 540h13v14h-13zM51 581h14v14h-14zM329 581h13v14h-13zM672 595h14v13h-14zM38 608h13v14h-13zM51 608h14v14h-14zM236 608h14v14h-14zM250 608h13v14h-13zM527 608h13v14h-13zM606 608h13v14h-13zM619 608h14v14h-14zM157 622h13v10h-13zM170 622h14v10h-14zM197 622h13v10h-13zM250 622h13v10h-13zM421 622h14v10h-14z"/>
<path fill="#6c6c6c" d="M38 0h13v9h-13zM51 0h14v9h-14zM157 0h13v9h-13zM487 9h14v14h-14zM25 23h13v13h-13zM38 23h13v13h-13zM65 23h13v13h-13zM78 23h13v13h-13zM78 36h13v14h-13zM104 36h13v14h-13zM117 36h14v14h-14zM170 36h14v14h-14zM157 50h13v14h-13zM580 50h13v14h-13zM659 50h13v14h-13zM672 50h14v14h-14zM686 50h13v14h-13zM250 64h13v13h-13zM144 77h13v14h-13zM210 77h13v14h-13zM567 77h13v14h-13zM14 91h11v13h-11zM25 91h13v13h-13zM51 91h14v13h-14zM65 91h13v13h-13zM250 91h13v13h-13zM659 91h13v13h-13zM738 91h14v13h-14zM65 104h13v14h-13zM104 104h13v14h-13zM368 104h14v14h-14zM580 104h13v14h-13zM65 118h13v14h-13zM184 118h13v14h-13zM567 118h13v14h-13zM580 118h13v14h-13zM593 118h13v14h-13zM91 132h13v13h-13zM659 132h13v13h-13zM672 132h14v13h-14zM686 132h13v13h-13zM144 145h13v14h-13zM170 145h14v14h-14zM210 145h13v14h-13zM580 145h13v14h-13zM14 159h11v13h-11zM117 159h14v13h-14zM14 172h11v14h-11zM329 172h13v14h-13zM14 186h11v14h-11zM51 186h14v14h-14zM184 186h13v14h-13zM263 186h13v14h-13zM276 186h13v14h-13zM14 200h11v13h-11zM51 200h14v13h-14zM672 200h14v13h-14zM14 213h11v14h-11zM25 213h13v14h-13zM51 213h14v14h-14zM65 213h13v14h-13zM91 213h13v14h-13zM250 213h13v14h-13zM263 213h13v14h-13zM14 227h11v14h-11zM65 227h13v14h-13zM91 227h13v14h-13zM144 227h13v14h-13zM170 227h14v14h-14zM250 227h13v14h-13zM263 227h13v14h-13zM276 227h13v14h-13zM686 227h13v14h-13zM699 227h13v14h-13zM712 227h13v14h-13zM725 227h13v14h-13zM157 254h13v14h-13zM553 268h14v14h-14zM117 282h14v13h-14zM131 282h13v13h-13zM157 282h13v13h-13zM170 282h14v13h-14zM184 282h13v13h-13zM276 295h13v14h-13zM501 295h13v14h-13zM157 309h13v13h-13zM170 309h14v13h-14zM38 322h13v14h-13zM78 322h13v14h-13zM276 322h13v14h-13zM514 322h13v14h-13zM197 336h13v14h-13zM236 336h14v14h-14zM501 336h13v14h-13zM606 336h13v14h-13zM699 336h13v14h-13zM25 350h13v13h-13zM117 350h14v13h-14zM236 350h14v13h-14zM606 350h13v13h-13zM619 350h14v13h-14zM170 363h14v14h-14zM250 363h13v14h-13zM14 377h11v13h-11zM91 377h13v13h-13zM104 377h13v13h-13zM210 377h13v13h-13zM65 390h13v14h-13zM157 404h13v14h-13zM197 404h13v14h-13zM765 404h13v14h-13zM91 418h13v13h-13zM236 418h14v13h-14zM250 418h13v13h-13zM765 418h13v13h-13zM78 431h13v14h-13zM197 431h13v14h-13zM223 431h13v14h-13zM712 431h13v14h-13zM765 431h13v14h-13zM78 445h13v14h-13zM131 445h13v14h-13zM157 445h13v14h-13zM197 445h13v14h-13zM514 445h13v14h-13zM527 445h13v14h-13zM619 445h14v14h-14zM131 459h13v13h-13zM157 459h13v13h-13zM197 459h13v13h-13zM514 459h13v13h-13zM659 459h13v13h-13zM672 459h14v13h-14zM725 472h13v14h-13zM157 486h13v14h-13zM236 486h14v14h-14zM104 500h13v13h-13zM157 500h13v13h-13zM289 500h13v13h-13zM302 500h14v13h-14zM316 500h13v13h-13zM329 500h13v13h-13zM342 500h13v13h-13zM368 500h14v13h-14zM527 500h13v13h-13zM540 500h13v13h-13zM289 513h13v14h-13zM302 513h14v14h-14zM368 513h14v14h-14zM382 513h13v14h-13zM421 513h14v14h-14zM527 513h13v14h-13zM540 513h13v14h-13zM712 513h13v14h-13zM619 527h14v13h-14zM65 540h13v14h-13zM210 540h13v14h-13zM276 540h13v14h-13zM395 540h13v14h-13zM725 540h13v14h-13zM752 540h13v14h-13zM540 554h13v14h-13zM580 554h13v14h-13zM738 554h14v14h-14zM606 568h13v13h-13zM619 568h14v13h-14zM38 581h13v14h-13zM157 581h13v14h-13zM250 581h13v14h-13zM263 581h13v14h-13zM316 581h13v14h-13zM91 595h13v13h-13zM117 595h14v13h-14zM302 595h14v13h-14zM606 595h13v13h-13zM633 608h13v14h-13zM646 608h13v14h-13zM725 608h13v14h-13zM144 622h13v10h-13zM593 622h13v10h-13zM606 622h13v10h-13zM619 622h14v10h-14zM646 622h13v10h-13z"/>
<path fill="#707070" d="M421 0h14v9h-14zM435 0h13v9h-13zM474 0h13v9h-13zM540 0h13v9h-13zM619 0h14v9h-14zM633 0h13v9h-13zM752 0h13v9h-13zM38 9h13v14h-13zM51 9h14v14h-14zM448 9h13v14h-13zM461 9h13v14h-13zM474 9h13v14h-13zM501 9h13v14h-13zM514 9h13v14h-13zM659 9h13v14h-13zM738 9h14v14h-14zM752 23h13v13h-13zM408 36h13v14h-13zM421 36h14v14h-14zM170 50h14v14h-14zM184 50h13v14h-13zM329 50h13v14h-13zM738 50h14v14h-14zM752 50h13v14h-13zM78 64h13v13h-13zM38 77h13v14h-13zM51 77h14v14h-14zM65 77h13v14h-13zM236 77h14v14h-14zM250 77h13v14h-13zM382 77h13v14h-13zM144 91h13v13h-13zM157 91h13v13h-13zM170 91h14v13h-14zM184 91h13v13h-13zM197 91h13v13h-13zM210 91h13v13h-13zM501 91h13v13h-13zM580 91h13v13h-13zM144 104h13v14h-13zM461 104h13v14h-13zM501 104h13v14h-13zM144 118h13v14h-13zM157 118h13v14h-13zM501 118h13v14h-13zM659 118h13v14h-13zM131 132h13v13h-13zM263 132h13v13h-13zM316 132h13v13h-13zM250 145h13v14h-13zM316 145h13v14h-13zM553 145h14v14h-14zM197 159h13v13h-13zM236 159h14v13h-14zM250 159h13v13h-13zM355 159h13v13h-13zM448 159h13v13h-13zM395 172h13v14h-13zM355 186h13v14h-13zM368 186h14v14h-14zM382 186h13v14h-13zM474 186h13v14h-13zM276 200h13v13h-13zM342 200h13v13h-13zM474 213h13v14h-13zM501 213h13v14h-13zM223 227h13v14h-13zM435 227h13v14h-13zM567 227h13v14h-13zM580 227h13v14h-13zM633 241h13v13h-13zM738 241h14v13h-14zM236 254h14v14h-14zM157 268h13v14h-13zM236 268h14v14h-14zM421 268h14v14h-14zM435 268h13v14h-13zM223 282h13v13h-13zM316 282h13v13h-13zM633 282h13v13h-13zM157 295h13v14h-13zM289 295h13v14h-13zM421 295h14v14h-14zM487 295h14v14h-14zM699 295h13v14h-13zM712 295h13v14h-13zM633 309h13v13h-13zM699 309h13v13h-13zM104 322h13v14h-13zM448 322h13v14h-13zM686 322h13v14h-13zM699 322h13v14h-13zM117 336h14v14h-14zM342 336h13v14h-13zM448 336h13v14h-13zM580 336h13v14h-13zM619 336h14v14h-14zM712 336h13v14h-13zM725 336h13v14h-13zM738 336h14v14h-14zM448 350h13v13h-13zM131 363h13v14h-13zM157 363h13v14h-13zM289 363h13v14h-13zM329 363h13v14h-13zM487 363h14v14h-14zM289 377h13v13h-13zM659 377h13v13h-13zM289 390h13v14h-13zM435 390h13v14h-13zM527 390h13v14h-13zM593 390h13v14h-13zM738 390h14v14h-14zM104 404h13v14h-13zM184 404h13v14h-13zM223 404h13v14h-13zM461 404h13v14h-13zM725 404h13v14h-13zM738 404h14v14h-14zM197 418h13v13h-13zM223 418h13v13h-13zM408 418h13v13h-13zM540 418h13v13h-13zM553 418h14v13h-14zM752 418h13v13h-13zM104 431h13v14h-13zM289 431h13v14h-13zM329 431h13v14h-13zM408 431h13v14h-13zM421 431h14v14h-14zM487 431h14v14h-14zM382 445h13v14h-13zM395 445h13v14h-13zM408 445h13v14h-13zM448 445h13v14h-13zM474 445h13v14h-13zM659 445h13v14h-13zM725 445h13v14h-13zM738 445h14v14h-14zM752 445h13v14h-13zM633 459h13v13h-13zM725 459h13v13h-13zM738 459h14v13h-14zM421 472h14v14h-14zM435 472h13v14h-13zM501 472h13v14h-13zM514 472h13v14h-13zM752 472h13v14h-13zM435 486h13v14h-13zM699 486h13v14h-13zM91 500h13v13h-13zM487 500h14v13h-14zM342 513h13v14h-13zM514 513h13v14h-13zM580 513h13v14h-13zM699 527h13v13h-13zM765 527h13v13h-13zM553 540h14v14h-14zM606 540h13v14h-13zM699 540h13v14h-13zM382 554h13v14h-13zM553 554h14v14h-14zM646 554h13v14h-13zM752 554h13v14h-13zM51 568h14v13h-14zM316 568h13v13h-13zM567 568h13v13h-13zM461 581h13v14h-13zM580 581h13v14h-13zM540 595h13v13h-13zM435 608h13v14h-13zM686 608h13v14h-13zM474 622h13v10h-13zM527 622h13v10h-13zM672 622h14v10h-14zM699 622h13v10h-13zM738 622h14v10h-14z"/>
<path fill="#747474" d="M487 0h14v9h-14zM25 9h13v14h-13zM65 9h13v14h-13zM78 9h13v14h-13zM157 9h13v14h-13zM78 50h13v14h-13zM131 50h13v14h-13zM236 50h14v14h-14zM765 50h13v14h-13zM25 118h13v14h-13zM78 118h13v14h-13zM170 118h14v14h-14zM553 132h14v13h-14zM131 145h13v14h-13zM157 145h13v14h-13zM25 159h13v13h-13zM25 172h13v14h-13zM91 186h13v14h-13zM144 186h13v14h-13zM435 200h13v13h-13zM487 200h14v13h-14zM38 213h13v14h-13zM236 213h14v14h-14zM659 213h13v14h-13zM184 227h13v14h-13zM25 241h13v13h-13zM514 254h13v14h-13zM540 268h13v14h-13zM25 282h13v13h-13zM170 295h14v14h-14zM117 309h14v13h-14zM223 336h13v14h-13zM210 363h13v14h-13zM131 377h13v13h-13zM144 377h13v13h-13zM514 390h13v14h-13zM38 404h13v14h-13zM514 404h13v14h-13zM540 404h13v14h-13zM699 404h13v14h-13zM712 404h13v14h-13zM725 418h13v13h-13zM25 431h13v14h-13zM527 431h13v14h-13zM725 431h13v14h-13zM738 431h14v14h-14zM752 431h13v14h-13zM170 445h14v14h-14zM184 459h13v13h-13zM646 472h13v14h-13zM329 486h13v14h-13zM553 486h14v14h-14zM659 486h13v14h-13zM752 486h13v14h-13zM78 500h13v13h-13zM395 500h13v13h-13zM408 500h13v13h-13zM633 500h13v13h-13zM38 513h13v14h-13zM144 513h13v14h-13zM223 513h13v14h-13zM461 513h13v14h-13zM276 527h13v13h-13zM712 527h13v13h-13zM725 527h13v13h-13zM38 540h13v14h-13zM51 540h14v14h-14zM342 540h13v14h-13zM355 540h13v14h-13zM382 540h13v14h-13zM593 540h13v14h-13zM686 540h13v14h-13zM65 554h13v14h-13zM65 568h13v13h-13zM104 568h13v13h-13zM184 568h13v13h-13zM197 568h13v13h-13zM355 568h13v13h-13zM686 568h13v13h-13zM104 581h13v14h-13zM633 581h13v14h-13zM421 595h14v13h-14zM553 595h14v13h-14zM474 608h13v14h-13zM51 622h14v10h-14zM712 622h13v10h-13zM725 622h13v10h-13z"/>
<path fill="#787878" d="M25 0h13v9h-13zM65 0h13v9h-13zM78 0h13v9h-13zM236 0h14v9h-14zM408 0h13v9h-13zM514 0h13v9h-13zM580 0h13v9h-13zM104 9h13v14h-13zM210 9h13v14h-13zM580 9h13v14h-13zM633 9h13v14h-13zM104 23h13v13h-13zM117 23h14v13h-14zM157 23h13v13h-13zM210 23h13v13h-13zM435 23h13v13h-13zM540 23h13v13h-13zM157 36h13v14h-13zM184 36h13v14h-13zM289 36h13v14h-13zM474 36h13v14h-13zM752 36h13v14h-13zM104 50h13v14h-13zM236 64h14v13h-14zM738 64h14v13h-14zM197 77h13v14h-13zM474 77h13v14h-13zM501 77h13v14h-13zM38 91h13v13h-13zM78 104h13v14h-13zM197 104h13v14h-13zM210 104h13v14h-13zM236 104h14v14h-14zM527 104h13v14h-13zM659 104h13v14h-13zM104 118h13v14h-13zM236 118h14v14h-14zM250 118h13v14h-13zM448 118h13v14h-13zM461 118h13v14h-13zM157 132h13v13h-13zM580 132h13v13h-13zM699 132h13v13h-13zM712 132h13v13h-13zM725 132h13v13h-13zM263 145h13v14h-13zM289 145h13v14h-13zM487 145h14v14h-14zM289 159h13v13h-13zM302 159h14v13h-14zM131 172h13v14h-13zM263 172h13v14h-13zM474 172h13v14h-13zM435 186h13v14h-13zM487 186h14v14h-14zM210 200h13v13h-13zM448 200h13v13h-13zM514 200h13v13h-13zM197 213h13v14h-13zM553 213h14v14h-14zM765 213h13v14h-13zM25 227h13v14h-13zM421 227h14v14h-14zM474 227h13v14h-13zM263 241h13v13h-13zM276 241h13v13h-13zM487 241h14v13h-14zM501 254h13v14h-13zM646 254h13v14h-13zM302 268h14v14h-14zM329 268h13v14h-13zM355 268h13v14h-13zM474 268h13v14h-13zM672 268h14v14h-14zM765 268h13v14h-13zM144 282h13v13h-13zM302 282h14v13h-14zM421 282h14v13h-14zM448 282h13v13h-13zM474 282h13v13h-13zM117 295h14v14h-14zM144 295h13v14h-13zM408 350h13v13h-13zM263 363h13v14h-13zM276 363h13v14h-13zM117 377h14v13h-14zM487 377h14v13h-14zM553 377h14v13h-14zM144 390h13v14h-13zM197 390h13v14h-13zM316 390h13v14h-13zM421 390h14v14h-14zM765 390h13v14h-13zM144 404h13v14h-13zM421 404h14v14h-14zM527 404h13v14h-13zM567 404h13v14h-13zM606 404h13v14h-13zM686 404h13v14h-13zM752 404h13v14h-13zM78 418h13v13h-13zM144 418h13v13h-13zM514 418h13v13h-13zM672 418h14v13h-14zM699 418h13v13h-13zM712 418h13v13h-13zM738 418h14v13h-14zM184 431h13v14h-13zM355 431h13v14h-13zM501 431h13v14h-13zM553 431h14v14h-14zM619 431h14v14h-14zM672 431h14v14h-14zM686 431h13v14h-13zM104 445h13v14h-13zM144 445h13v14h-13zM368 445h14v14h-14zM461 445h13v14h-13zM487 445h14v14h-14zM78 459h13v13h-13zM144 459h13v13h-13zM501 459h13v13h-13zM752 459h13v13h-13zM448 472h13v14h-13zM672 472h14v14h-14zM686 472h13v14h-13zM699 472h13v14h-13zM738 472h14v14h-14zM421 486h14v14h-14zM461 486h13v14h-13zM144 500h13v13h-13zM738 500h14v13h-14zM752 500h13v13h-13zM78 513h13v14h-13zM316 513h13v14h-13zM329 513h13v14h-13zM448 513h13v14h-13zM752 513h13v14h-13zM395 527h13v13h-13zM408 527h13v13h-13zM514 527h13v13h-13zM197 540h13v14h-13zM302 540h14v14h-14zM408 540h13v14h-13zM567 540h13v14h-13zM619 540h14v14h-14zM712 540h13v14h-13zM104 554h13v14h-13zM131 554h13v14h-13zM144 554h13v14h-13zM184 554h13v14h-13zM289 554h13v14h-13zM355 554h13v14h-13zM368 554h14v14h-14zM395 554h13v14h-13zM593 554h13v14h-13zM606 554h13v14h-13zM619 554h14v14h-14zM686 554h13v14h-13zM302 568h14v13h-14zM342 568h13v13h-13zM527 568h13v13h-13zM408 581h13v14h-13zM527 581h13v14h-13zM659 581h13v14h-13zM752 581h13v14h-13zM131 595h13v13h-13zM619 595h14v13h-14zM646 595h13v13h-13zM342 622h13v10h-13zM435 622h13v10h-13zM553 622h14v10h-14z"/>
<path fill="#7c7c7c" d="M302 186h14v14h-14zM553 254h14v14h-14zM223 363h13v14h-13zM236 363h14v14h-14zM25 390h13v14h-13zM14 404h11v14h-11zM78 404h13v14h-13zM501 404h13v14h-13zM276 431h13v14h-13zM91 486h13v14h-13zM104 486h13v14h-13zM672 486h14v14h-14zM501 500h13v13h-13zM514 500h13v13h-13zM91 568h13v13h-13zM117 568h14v13h-14zM131 568h13v13h-13zM144 568h13v13h-13zM553 581h14v14h-14zM38 622h13v10h-13zM686 622h13v10h-13z"/>
<path fill="#808080" d="M250 0h13v9h-13zM263 0h13v9h-13zM527 0h13v9h-13zM263 9h13v14h-13zM421 9h14v14h-14zM435 9h13v14h-13zM553 9h14v14h-14zM144 23h13v13h-13zM289 23h13v13h-13zM316 23h13v13h-13zM408 23h13v13h-13zM435 36h13v14h-13zM144 50h13v14h-13zM223 50h13v14h-13zM250 50h13v14h-13zM276 50h13v14h-13zM289 50h13v14h-13zM461 50h13v14h-13zM474 50h13v14h-13zM540 50h13v14h-13zM210 64h13v13h-13zM329 64h13v13h-13zM487 64h14v13h-14zM501 64h13v13h-13zM514 64h13v13h-13zM567 64h13v13h-13zM580 64h13v13h-13zM765 64h13v13h-13zM329 77h13v14h-13zM752 77h13v14h-13zM223 91h13v13h-13zM395 91h13v13h-13zM421 91h14v13h-14zM435 91h13v13h-13zM514 91h13v13h-13zM25 104h13v14h-13zM250 104h13v14h-13zM382 104h13v14h-13zM197 118h13v14h-13zM368 118h14v14h-14zM382 118h13v14h-13zM540 118h13v14h-13zM553 118h14v14h-14zM170 132h14v13h-14zM184 132h13v13h-13zM197 132h13v13h-13zM276 132h13v13h-13zM289 132h13v13h-13zM474 132h13v13h-13zM527 132h13v13h-13zM184 145h13v14h-13zM197 145h13v14h-13zM276 145h13v14h-13zM355 145h13v14h-13zM501 145h13v14h-13zM712 145h13v14h-13zM725 145h13v14h-13zM210 159h13v13h-13zM223 159h13v13h-13zM263 159h13v13h-13zM276 159h13v13h-13zM474 159h13v13h-13zM117 172h14v14h-14zM368 172h14v14h-14zM382 172h13v14h-13zM408 172h13v14h-13zM752 186h13v14h-13zM91 200h13v13h-13zM184 200h13v13h-13zM170 213h14v14h-14zM184 213h13v14h-13zM302 213h14v14h-14zM421 213h14v14h-14zM51 227h14v14h-14zM659 227h13v14h-13zM289 241h13v13h-13zM474 241h13v13h-13zM514 241h13v13h-13zM540 241h13v13h-13zM553 241h14v13h-14zM646 241h13v13h-13zM421 254h14v14h-14zM474 254h13v14h-13zM659 254h13v14h-13zM144 268h13v14h-13zM342 268h13v14h-13zM395 268h13v14h-13zM408 268h13v14h-13zM210 282h13v13h-13zM567 282h13v13h-13zM461 295h13v14h-13zM276 309h13v13h-13zM342 309h13v13h-13zM408 309h13v13h-13zM25 336h13v14h-13zM567 336h13v14h-13zM210 350h13v13h-13zM435 350h13v13h-13zM78 377h13v13h-13zM474 377h13v13h-13zM514 377h13v13h-13zM487 390h14v14h-14zM501 390h13v14h-13zM633 390h13v14h-13zM646 390h13v14h-13zM659 390h13v14h-13zM289 404h13v14h-13zM302 404h14v14h-14zM104 418h13v13h-13zM289 418h13v13h-13zM316 418h13v13h-13zM329 418h13v13h-13zM580 418h13v13h-13zM593 418h13v13h-13zM606 418h13v13h-13zM619 418h14v13h-14zM210 431h13v14h-13zM474 431h13v14h-13zM501 445h13v14h-13zM672 445h14v14h-14zM765 445h13v14h-13zM368 459h14v13h-14zM765 459h13v13h-13zM104 472h13v14h-13zM78 486h13v14h-13zM131 486h13v14h-13zM144 486h13v14h-13zM738 486h14v14h-14zM461 500h13v13h-13zM474 513h13v14h-13zM567 513h13v14h-13zM342 527h13v13h-13zM633 527h13v13h-13zM540 540h13v14h-13zM408 554h13v14h-13zM78 568h13v13h-13zM395 568h13v13h-13zM408 568h13v13h-13zM448 568h13v13h-13zM593 568h13v13h-13zM633 568h13v13h-13zM197 581h13v14h-13zM752 595h13v13h-13zM342 608h13v14h-13zM738 608h14v14h-14z"/>
<path fill="#848484" d="M131 36h13v14h-13zM144 36h13v14h-13zM633 91h13v13h-13zM448 104h13v14h-13zM686 104h13v14h-13zM342 172h13v14h-13zM738 213h14v14h-14zM738 227h14v14h-14zM659 241h13v13h-13zM672 241h14v13h-14zM170 377h14v13h-14zM250 377h13v13h-13zM91 390h13v14h-13zM567 418h13v13h-13zM91 472h13v14h-13zM197 472h13v14h-13zM210 472h13v14h-13zM395 513h13v14h-13zM448 527h13v13h-13zM78 554h13v14h-13zM448 554h13v14h-13zM210 581h13v14h-13zM144 595h13v13h-13zM395 608h13v14h-13zM408 622h13v10h-13z"/>
<path fill="#888888" d="M144 0h13v9h-13zM197 0h13v9h-13zM501 0h13v9h-13zM144 9h13v14h-13zM580 23h13v13h-13zM646 23h13v13h-13zM236 36h14v14h-14zM276 36h13v14h-13zM461 36h13v14h-13zM580 36h13v14h-13zM646 36h13v14h-13zM567 50h13v14h-13zM633 50h13v14h-13zM263 64h13v13h-13zM633 64h13v13h-13zM646 64h13v13h-13zM78 77h13v14h-13zM91 77h13v14h-13zM223 77h13v14h-13zM408 77h13v14h-13zM461 77h13v14h-13zM514 77h13v14h-13zM580 77h13v14h-13zM738 77h14v14h-14zM765 77h13v14h-13zM78 91h13v13h-13zM91 91h13v13h-13zM765 91h13v13h-13zM91 104h13v14h-13zM117 104h14v14h-14zM435 104h13v14h-13zM514 104h13v14h-13zM765 104h13v14h-13zM117 118h14v14h-14zM131 118h13v14h-13zM263 118h13v14h-13zM474 118h13v14h-13zM527 118h13v14h-13zM14 145h11v14h-11zM329 145h13v14h-13zM131 159h13v13h-13zM342 159h13v13h-13zM487 159h14v13h-14zM276 172h13v14h-13zM435 172h13v14h-13zM448 172h13v14h-13zM421 186h14v14h-14zM501 186h13v14h-13zM316 200h13v13h-13zM355 200h13v13h-13zM474 200h13v13h-13zM619 213h14v14h-14zM38 227h13v14h-13zM408 227h13v14h-13zM553 227h14v14h-14zM619 227h14v14h-14zM144 241h13v13h-13zM236 241h14v13h-14zM686 241h13v13h-13zM752 241h13v13h-13zM144 254h13v14h-13zM540 254h13v14h-13zM686 254h13v14h-13zM210 268h13v14h-13zM765 282h13v13h-13zM104 295h13v14h-13zM633 295h13v14h-13zM686 295h13v14h-13zM25 322h13v14h-13zM408 322h13v14h-13zM421 322h14v14h-14zM514 336h13v14h-13zM197 350h13v13h-13zM342 350h13v13h-13zM501 350h13v13h-13zM567 350h13v13h-13zM117 363h14v14h-14zM184 377h13v13h-13zM197 377h13v13h-13zM329 377h13v13h-13zM276 390h13v14h-13zM329 390h13v14h-13zM553 390h14v14h-14zM580 390h13v14h-13zM210 404h13v14h-13zM263 404h13v14h-13zM276 404h13v14h-13zM553 404h14v14h-14zM580 404h13v14h-13zM593 404h13v14h-13zM210 418h13v13h-13zM302 418h14v13h-14zM355 418h13v13h-13zM368 418h14v13h-14zM435 418h13v13h-13zM501 418h13v13h-13zM144 431h13v14h-13zM263 431h13v14h-13zM342 431h13v14h-13zM395 431h13v14h-13zM553 445h14v14h-14zM659 472h13v14h-13zM408 513h13v14h-13zM501 513h13v14h-13zM38 527h13v13h-13zM51 527h14v13h-14zM302 527h14v13h-14zM316 527h13v13h-13zM368 527h14v13h-14zM382 527h13v13h-13zM435 527h13v13h-13zM368 540h14v14h-14zM448 540h13v14h-13zM514 540h13v14h-13zM765 540h13v14h-13zM197 554h13v14h-13zM329 568h13v13h-13zM435 568h13v13h-13zM302 581h14v14h-14zM474 595h13v13h-13zM633 595h13v13h-13zM672 608h14v14h-14zM765 608h13v14h-13zM368 622h14v10h-14z"/>
<path fill="#8c8c8c" d="M210 36h13v14h-13zM276 64h13v13h-13zM210 132h13v13h-13zM157 377h13v13h-13zM157 390h13v14h-13zM170 390h14v14h-14zM184 390h13v14h-13zM25 418h13v13h-13zM184 445h13v14h-13zM448 500h13v13h-13zM91 581h13v14h-13zM131 581h13v14h-13zM144 581h13v14h-13zM210 595h13v13h-13z"/>
<path fill="#909090" d="M329 0h13v9h-13zM395 0h13v9h-13zM302 9h14v14h-14zM408 9h13v14h-13zM527 9h13v14h-13zM646 9h13v14h-13zM250 23h13v13h-13zM395 23h13v13h-13zM448 23h13v13h-13zM527 23h13v13h-13zM765 23h13v13h-13zM250 36h13v14h-13zM263 36h13v14h-13zM395 36h13v14h-13zM527 36h13v14h-13zM540 36h13v14h-13zM765 36h13v14h-13zM263 50h13v14h-13zM408 50h13v14h-13zM421 50h14v14h-14zM435 50h13v14h-13zM289 64h13v13h-13zM368 64h14v13h-14zM408 64h13v13h-13zM435 64h13v13h-13zM474 64h13v13h-13zM263 77h13v14h-13zM395 77h13v14h-13zM435 77h13v14h-13zM448 77h13v14h-13zM263 91h13v13h-13zM302 91h14v13h-14zM448 91h13v13h-13zM131 104h13v14h-13zM355 104h13v14h-13zM91 118h13v14h-13zM223 118h13v14h-13zM395 118h13v14h-13zM514 118h13v14h-13zM765 118h13v14h-13zM329 132h13v13h-13zM342 132h13v13h-13zM355 132h13v13h-13zM223 145h13v14h-13zM342 145h13v14h-13zM474 145h13v14h-13zM738 186h14v14h-14zM197 200h13v13h-13zM382 200h13v13h-13zM738 200h14v13h-14zM752 200h13v13h-13zM368 213h14v14h-14zM395 213h13v14h-13zM752 213h13v14h-13zM210 227h13v14h-13zM342 227h13v14h-13zM752 227h13v14h-13zM765 227h13v14h-13zM91 241h13v13h-13zM104 241h13v13h-13zM104 254h13v14h-13zM197 268h13v14h-13zM197 282h13v13h-13zM104 309h13v13h-13zM223 350h13v13h-13zM514 350h13v13h-13zM342 363h13v14h-13zM448 363h13v14h-13zM514 363h13v14h-13zM263 377h13v13h-13zM276 377h13v13h-13zM302 377h14v13h-14zM316 377h13v13h-13zM461 377h13v13h-13zM501 377h13v13h-13zM263 390h13v14h-13zM461 390h13v14h-13zM474 390h13v14h-13zM752 390h13v14h-13zM368 404h14v14h-14zM474 404h13v14h-13zM487 404h14v14h-14zM276 418h13v13h-13zM487 418h14v13h-14zM368 431h14v14h-14zM382 431h13v14h-13zM342 445h13v14h-13zM421 445h14v14h-14zM448 486h13v14h-13zM289 527h13v13h-13zM461 527h13v13h-13zM316 540h13v14h-13zM435 540h13v14h-13zM501 540h13v14h-13zM527 540h13v14h-13zM25 595h13v13h-13zM487 595h14v13h-14zM527 595h13v13h-13zM659 595h13v13h-13zM765 595h13v13h-13zM355 608h13v14h-13zM368 608h14v14h-14zM448 608h13v14h-13zM487 608h14v14h-14zM514 608h13v14h-13zM236 622h14v10h-14zM461 622h13v10h-13zM514 622h13v10h-13z"/>
<path fill="#989898" d="M553 0h14v9h-14zM236 9h14v14h-14zM250 9h13v14h-13zM236 23h14v13h-14zM276 23h13v13h-13zM302 23h14v13h-14zM382 23h13v13h-13zM461 23h13v13h-13zM382 36h13v14h-13zM448 36h13v14h-13zM210 50h13v14h-13zM382 50h13v14h-13zM646 50h13v14h-13zM223 64h13v13h-13zM302 64h14v13h-14zM382 64h13v13h-13zM117 77h14v14h-14zM302 77h14v14h-14zM316 77h13v14h-13zM421 77h14v14h-14zM117 91h14v13h-14zM342 91h13v13h-13zM408 91h13v13h-13zM223 104h13v14h-13zM316 104h13v14h-13zM342 104h13v14h-13zM421 104h14v14h-14zM276 118h13v14h-13zM289 118h13v14h-13zM316 118h13v14h-13zM342 118h13v14h-13zM355 118h13v14h-13zM421 118h14v14h-14zM435 118h13v14h-13zM686 118h13v14h-13zM223 132h13v13h-13zM302 145h14v14h-14zM355 172h13v14h-13zM408 186h13v14h-13zM395 200h13v13h-13zM501 200h13v13h-13zM210 213h13v14h-13zM289 227h13v14h-13zM302 227h14v14h-14zM316 227h13v14h-13zM461 227h13v14h-13zM501 241h13v13h-13zM197 254h13v14h-13zM382 268h13v14h-13zM408 295h13v14h-13zM461 309h13v13h-13zM302 363h14v14h-14zM448 377h13v13h-13zM78 390h13v14h-13zM104 390h13v14h-13zM117 390h14v14h-14zM302 390h14v14h-14zM25 404h13v14h-13zM263 418h13v13h-13zM474 418h13v13h-13zM527 418h13v13h-13zM686 418h13v13h-13zM14 431h11v14h-11zM435 459h13v13h-13zM553 459h14v13h-14zM78 472h13v14h-13zM553 472h14v14h-14zM633 472h13v14h-13zM633 486h13v14h-13zM487 513h14v14h-14zM289 540h13v14h-13zM329 554h13v14h-13zM487 554h14v14h-14zM501 554h13v14h-13zM514 554h13v14h-13zM765 554h13v14h-13zM382 568h13v13h-13zM421 581h14v14h-14zM25 608h13v14h-13zM25 622h13v10h-13zM382 622h13v10h-13z"/>
<path fill="#9c9c9c" d="M78 527h13v13h-13zM461 568h13v13h-13zM474 568h13v13h-13zM514 568h13v13h-13zM25 581h13v14h-13zM117 581h14v14h-14zM210 608h13v14h-13zM210 622h13v10h-13z"/>
<path fill="#a0a0a0" d="M302 0h14v9h-14zM316 0h13v9h-13zM342 0h13v9h-13zM355 0h13v9h-13zM368 0h14v9h-14zM382 0h13v9h-13zM197 9h13v14h-13zM329 9h13v14h-13zM355 9h13v14h-13zM395 9h13v14h-13zM197 23h13v13h-13zM263 23h13v13h-13zM368 23h14v13h-14zM197 36h13v14h-13zM368 36h14v14h-14zM197 50h13v14h-13zM395 50h13v14h-13zM448 50h13v14h-13zM197 64h13v13h-13zM355 64h13v13h-13zM395 64h13v13h-13zM448 64h13v13h-13zM461 64h13v13h-13zM276 77h13v14h-13zM289 77h13v14h-13zM276 91h13v13h-13zM289 91h13v13h-13zM316 91h13v13h-13zM263 104h13v14h-13zM276 104h13v14h-13zM289 104h13v14h-13zM395 104h13v14h-13zM236 132h14v13h-14zM435 159h13v13h-13zM289 172h13v14h-13zM302 172h14v14h-14zM421 172h14v14h-14zM197 186h13v14h-13zM395 186h13v14h-13zM448 213h13v14h-13zM197 227h13v14h-13zM236 227h14v14h-14zM197 241h13v13h-13zM342 241h13v13h-13zM408 241h13v13h-13zM210 254h13v14h-13zM223 254h13v14h-13zM395 254h13v14h-13zM672 254h14v14h-14zM368 268h14v14h-14zM14 322h11v14h-11zM14 350h11v13h-11zM355 350h13v13h-13zM14 363h11v14h-11zM448 390h13v14h-13zM250 404h13v14h-13zM342 404h13v14h-13zM355 404h13v14h-13zM342 418h13v13h-13zM461 418h13v13h-13zM435 431h13v14h-13zM448 431h13v14h-13zM461 431h13v14h-13zM421 527h14v13h-14zM78 540h13v14h-13zM487 540h14v14h-14zM633 540h13v14h-13zM646 540h13v14h-13zM421 554h14v14h-14zM435 554h13v14h-13zM527 554h13v14h-13zM633 554h13v14h-13zM368 568h14v13h-14zM421 568h14v13h-14zM580 568h13v13h-13zM765 568h13v13h-13zM355 581h13v14h-13zM514 581h13v14h-13zM765 581h13v14h-13zM501 595h13v13h-13zM514 595h13v13h-13zM540 608h13v14h-13zM355 622h13v10h-13zM487 622h14v10h-14zM501 622h13v10h-13z"/>
<path fill="#a8a8a8" d="M342 9h13v14h-13zM368 9h14v14h-14zM382 9h13v14h-13zM316 36h13v14h-13zM302 50h14v14h-14zM421 64h14v13h-14zM342 77h13v14h-13zM210 118h13v14h-13zM14 132h11v13h-11zM302 132h14v13h-14zM236 145h14v14h-14zM408 159h13v13h-13zM421 159h14v13h-14zM368 200h14v13h-14zM408 200h13v13h-13zM316 213h13v14h-13zM329 213h13v14h-13zM355 227h13v14h-13zM368 227h14v14h-14zM395 227h13v14h-13zM210 241h13v13h-13zM223 241h13v13h-13zM329 241h13v13h-13zM355 241h13v13h-13zM368 241h14v13h-14zM435 282h13v13h-13zM329 295h13v14h-13zM686 309h13v13h-13zM316 350h13v13h-13zM197 363h13v14h-13zM236 377h14v13h-14zM342 377h13v13h-13zM250 390h13v14h-13zM355 390h13v14h-13zM368 390h14v14h-14zM236 404h14v14h-14zM408 404h13v14h-13zM14 418h11v13h-11zM382 418h13v13h-13zM435 445h13v14h-13zM501 527h13v13h-13zM567 527h13v13h-13zM461 540h13v14h-13zM461 554h13v14h-13zM474 554h13v14h-13zM487 568h14v13h-14zM501 568h13v13h-13zM395 581h13v14h-13zM474 581h13v14h-13zM487 581h14v14h-14zM501 581h13v14h-13zM368 595h14v13h-14zM382 595h13v13h-13zM395 595h13v13h-13zM382 608h13v14h-13zM501 608h13v14h-13zM395 622h13v10h-13zM448 622h13v10h-13z"/>
<path fill="#b0b0b0" d="M316 9h13v14h-13zM329 23h13v13h-13zM342 23h13v13h-13zM355 23h13v13h-13zM302 36h14v14h-14zM329 36h13v14h-13zM316 50h13v14h-13zM342 50h13v14h-13zM368 50h14v14h-14zM316 64h13v13h-13zM342 64h13v13h-13zM633 104h13v14h-13zM382 213h13v14h-13zM382 254h13v14h-13zM408 254h13v14h-13zM342 295h13v14h-13zM25 309h13v13h-13zM355 322h13v14h-13zM316 363h13v14h-13zM501 363h13v14h-13zM355 377h13v13h-13zM408 377h13v13h-13zM236 390h14v14h-14zM342 390h13v14h-13zM382 404h13v14h-13zM448 404h13v14h-13zM448 418h13v13h-13zM487 527h14v13h-14zM329 540h13v14h-13zM421 540h14v14h-14zM368 581h14v14h-14z"/>
<path fill="#b4b4b4" d="M342 36h13v14h-13zM540 622h13v10h-13z"/>
<path fill="#b8b8b8" d="M435 295h13v14h-13zM329 309h13v13h-13zM355 363h13v14h-13zM421 363h14v14h-14zM421 377h14v13h-14zM382 390h13v14h-13zM395 404h13v14h-13zM395 418h13v13h-13zM421 459h14v13h-14zM474 527h13v13h-13zM646 527h13v13h-13zM355 595h13v13h-13z"/>
<path fill="#bcbcbc" d="M672 104h14v14h-14z"/>
<path fill="#c0c0c0" d="M633 118h13v14h-13zM672 118h14v14h-14zM448 227h13v14h-13zM395 363h13v14h-13zM408 363h13v14h-13zM435 363h13v14h-13zM395 377h13v13h-13zM408 390h13v14h-13zM329 527h13v13h-13zM474 540h13v14h-13zM382 581h13v14h-13z"/>
<path fill="#c8c8c8" d="M355 36h13v14h-13zM408 104h13v14h-13zM408 118h13v14h-13zM329 254h13v14h-13zM448 309h13v13h-13zM368 377h14v13h-14zM382 377h13v13h-13z"/>
<path fill="#d0d0d0" d="M329 227h13v14h-13zM382 227h13v14h-13zM342 254h13v14h-13zM355 254h13v14h-13zM25 295h13v14h-13zM342 322h13v14h-13zM368 363h14v14h-14zM382 363h13v14h-13zM435 377h13v13h-13zM395 390h13v14h-13z"/>
<path fill="#d8d8d8" d="M355 50h13v14h-13z"/>
<path fill="#e0e0e0" d="M448 295h13v14h-13zM368 350h14v13h-14z"/>
<path fill="#e8e8e8" d="M368 282h14v13h-14z"/>
<path fill="#f4f4f4" d="M395 350h13v13h-13z"/>
<path fill="#f8f8f8" d="M368 254h14v14h-14z"/>
<path fill="#ffffff" d="M14 295h11v14h-11zM355 295h13v14h-13zM368 295h14v14h-14zM14 309h11v13h-11zM355 309h13v13h-13zM368 309h14v13h-14zM382 309h13v13h-13zM395 309h13v13h-13zM368 322h14v14h-14zM382 322h13v14h-13zM395 322h13v14h-13zM368 336h14v14h-14zM382 336h13v14h-13zM395 336h13v14h-13zM382 350h13v13h-13zM14 608h11v14h-11z"/>
</svg>
<div class="a" style="left:964px;top:242px;width:48px;height:147.5px;background:rgba(198,198,198,0.77)"></div>

<!-- uncert viewer -->
<div class="a tabrow" style="left:1022px;top:122px;width:1016px;height:40px"></div>
<div class="a tab" style="left:1070px;top:122.5px;width:218px;height:39.5px"></div>
<div class="a tb" style="left:1022px;top:162px;width:1014px;height:80px"></div>
<div class="a shadow" style="left:1104px;top:162px"></div>
<div class="a" style="left:1022px;top:242px;width:1016px;height:652px;background:#fff"></div>
<div class="a" style="left:1988px;top:242px;width:48px;height:51.5px;background:#d3d3d3"></div>

<!-- spectrum viewer -->
<div class="a tabrow" style="left:0;top:904px;width:2038px;height:40px"></div>
<div class="a tab" style="left:44px;top:904.5px;width:250px;height:39.5px"></div>
<div class="a tb" style="left:0;top:944px;width:2036px;height:80px"></div>
<div class="a shadow" style="left:78px;top:944px"></div>
<div class="a" style="left:0;top:1024px;width:2038px;height:646px;background:#fff"></div>
<div class="a" style="left:1868px;top:944px;width:80px;height:80px;background:#b95a26"></div>
<div class="a" style="left:1988px;top:1024px;width:48px;height:147.5px;background:#d3d3d3"></div>
<svg class="a" style="left:0;top:1024px" width="2036" height="646" viewBox="0 1024 2036 646">
<g stroke="#666" stroke-width="2" fill="none">
<path d="M187,1044 V1556 M187,1555 H2017"/>
<path d="M174,1044.8 H187"/>
<path d="M174,1117.7 H187"/>
<path d="M174,1190.6 H187"/>
<path d="M174,1263.5 H187"/>
<path d="M174,1336.4 H187"/>
<path d="M174,1409.3 H187"/>
<path d="M174,1482.2 H187"/>
<path d="M174,1555.1 H187"/>
<path d="M269.6,1555 V1566"/>
<path d="M465.2,1555 V1566"/>
<path d="M660.8,1555 V1566"/>
<path d="M856.3,1555 V1566"/>
<path d="M1051.9,1555 V1566"/>
<path d="M1247.5,1555 V1566"/>
<path d="M1443.1,1555 V1566"/>
<path d="M1638.7,1555 V1566"/>
<path d="M1834.2,1555 V1566"/>
<path d="M187,1555 V1566 M2017,1555 V1566"/>
</g>
<g font-family="Liberation Sans" font-weight="bold" font-size="29.8" fill="#757575">
<text x="167" y="1055.3" text-anchor="end">5.5e+4</text>
<text x="167" y="1128.2" text-anchor="end">4.5e+4</text>
<text x="167" y="1201.1" text-anchor="end">3.5e+4</text>
<text x="167" y="1274.0" text-anchor="end">2.5e+4</text>
<text x="167" y="1346.9" text-anchor="end">1.5e+4</text>
<text x="167" y="1419.8" text-anchor="end">5.0e+3</text>
<text x="167" y="1492.7" text-anchor="end">-5.0e+3</text>
<text x="167" y="1565.6" text-anchor="end">-1.5e+4</text>
<text x="269.6" y="1592.3" text-anchor="middle">15600</text>
<text x="465.2" y="1592.3" text-anchor="middle">15800</text>
<text x="660.8" y="1592.3" text-anchor="middle">16000</text>
<text x="856.3" y="1592.3" text-anchor="middle">16200</text>
<text x="1051.9" y="1592.3" text-anchor="middle">16400</text>
<text x="1247.5" y="1592.3" text-anchor="middle">16600</text>
<text x="1443.1" y="1592.3" text-anchor="middle">16800</text>
<text x="1638.7" y="1592.3" text-anchor="middle">17000</text>
<text x="1834.2" y="1592.3" text-anchor="middle">17200</text>
</g>
<text x="946" y="1638" font-family="Liberation Sans" font-size="30" fill="#222">Wavelength [Angstrom]</text>
<text transform="translate(46,1402) rotate(-90)" font-family="Liberation Sans" font-size="29" fill="#222">Flux density [ct]</text>
<path d="M186.9,1406.3 190.6,1406.8 193.8,1402.6 196.5,1404.2 200.2,1398.8 201.8,1401.0 203.4,1397.8 205.0,1399.9 208.2,1388.7 210.9,1386.6 213.0,1393.0 214.6,1389.8 216.2,1391.9 217.8,1396.7 222.6,1400.4 226.8,1399.4 230.0,1400.2 232.7,1396.7 237.5,1393.0 242.3,1395.7 243.9,1394.1 247.0,1392.8 249.2,1394.6 252.4,1403.6 255.6,1405.2 258.2,1411.6 261.9,1409.5 265.7,1403.6 268.9,1411.1 271.0,1407.4 273.7,1411.1 275.8,1410.0 279.0,1414.8 280.6,1412.7 283.2,1417.5 286.4,1417.5 289.6,1419.1 292.8,1417.5 295.5,1424.9 297.6,1423.9 303.5,1438.2 308.8,1435.0 313.0,1430.2 314.6,1431.8 317.8,1427.6 320.5,1414.3 322.1,1414.8 326.9,1421.2 328.5,1418.5 330.1,1420.1 334.3,1415.9 338.6,1414.8 341.2,1416.9 344.4,1410.6 347.1,1411.1 348.2,1407.9 352.9,1405.2 355.6,1398.8 359.9,1396.7 360.9,1397.2 362.5,1391.9 365.2,1389.8 368.9,1386.6 372.6,1393.5 374.8,1394.1 377.4,1396.2 381.7,1404.7 384.9,1405.8 386.5,1402.0 388.6,1404.7 391.3,1403.6 393.9,1413.7 396.0,1414.3 397.6,1417.5 399.2,1413.7 402.4,1415.3 405.6,1413.7 407.2,1414.8 408.8,1410.0 414.7,1403.1 416.3,1407.4 421.6,1405.8 425.3,1407.9 429.0,1400.4 430.0,1401.0 431.2,1401.0 433.2,1404.2 435.4,1405.8 436.4,1408.4 438.5,1409.5 441.2,1419.1 442.8,1419.6 445.4,1414.3 447.6,1417.5 450.8,1414.8 451.8,1419.1 453.4,1414.8 455.0,1416.9 457.1,1423.3 461.4,1428.1 464.6,1427.0 466.2,1429.7 468.3,1428.6 472.6,1430.0 476.8,1430.2 482.1,1438.8 484.8,1447.3 488.0,1445.1 490.7,1436.1 493.9,1434.5 496.0,1429.7 499.2,1436.1 502.4,1426.0 505.6,1432.4 507.2,1428.1 509.8,1412.7 511.4,1416.9 514.1,1414.3 516.2,1414.3 520.5,1405.8 523.7,1408.4 527.4,1405.8 529.0,1400.4 531.6,1401.0 536.4,1395.1 538.6,1393.0 540.2,1394.1 543.9,1385.0 546.0,1388.7 549.2,1385.5 551.9,1389.8 554.0,1396.2 556.6,1392.5 562.0,1401.5 565.2,1405.2 567.8,1404.2 568.9,1402.0 571.5,1410.0 573.7,1407.9 576.9,1414.8 579.0,1415.3 580.6,1418.5 584.9,1416.4 588.0,1420.1 589.6,1416.4 594.4,1423.9 597.6,1436.6 601.9,1454.2 605.1,1456.8 607.7,1453.7 610.4,1452.6 613.1,1444.6 615.2,1443.0 617.8,1436.6 621.0,1439.3 622.6,1433.4 625.3,1432.9 627.4,1435.0 630.1,1427.0 633.3,1433.4 635.4,1432.4 637.0,1432.4 639.7,1426.5 642.9,1425.5 644.5,1422.8 647.6,1422.8 649.8,1429.2 652.4,1429.2 655.6,1431.3 658.3,1424.4 661.5,1416.9 663.6,1418.0 665.7,1421.7 668.9,1428.1 673.7,1432.4 676.4,1428.1 679.0,1423.9 682.6,1426.3 683.3,1426.0 685.4,1421.7 686.3,1415.1 687.9,1421.7 688.6,1421.7 689.9,1419.7 691.2,1429.6 693.2,1432.2 698.5,1423.7 701.8,1419.7 703.8,1413.5 708.4,1413.5 714.4,1425.6 719.0,1427.6 722.3,1423.7 725.6,1425.0 727.6,1420.3 730.9,1419.7 732.2,1419.0 734.9,1404.5 737.5,1405.1 740.2,1411.1 744.8,1405.8 746.1,1407.8 751.4,1399.2 752.7,1393.9 754.7,1392.6 759.3,1378.0 761.3,1366.8 764.0,1370.8 766.6,1365.5 773.2,1379.3 776.5,1388.6 779.2,1397.2 781.8,1389.9 786.5,1406.5 788.4,1404.5 791.8,1410.4 793.7,1407.8 796.4,1409.8 798.4,1413.1 799.7,1411.1 801.0,1416.4 803.7,1418.4 807.0,1416.4 808.9,1419.0 812.2,1412.4 816.2,1407.1 819.5,1407.1 821.5,1413.7 824.2,1417.7 827.5,1427.0 829.4,1428.9 830.8,1434.9 832.1,1433.6 834.7,1441.5 838.7,1436.9 842.0,1431.6 842.7,1436.9 847.3,1423.0 850.6,1430.9 853.9,1431.6 857.2,1436.2 860.5,1442.8 863.8,1438.2 867.1,1440.2 870.4,1438.9 873.1,1431.6 877.7,1433.6 880.0,1433.3 883.6,1437.2 884.8,1431.5 886.8,1429.5 888.9,1435.7 889.5,1447.6 891.6,1451.2 897.3,1472.6 899.0,1470.8 900.8,1472.9 902.3,1469.6 903.8,1474.1 906.8,1470.8 909.2,1472.6 911.8,1468.8 913.6,1470.8 918.1,1465.5 922.9,1456.0 927.0,1450.0 930.3,1447.6 931.8,1453.0 933.6,1447.0 937.1,1446.7 938.6,1448.8 939.8,1445.5 942.5,1448.8 944.9,1449.1 947.9,1454.2 949.6,1452.7 951.4,1453.0" fill="none" stroke="#555" stroke-width="2" stroke-linejoin="round"/>
<path d="M1296.4,1440.2 1297.7,1430.3 1301.0,1437.5 1303.0,1434.9 1307.6,1444.8 1310.3,1453.4 1315.6,1460.7 1319.5,1458.0 1322.8,1452.1 1325.5,1452.7 1326.8,1448.8 1328.1,1448.8 1330.1,1439.5 1332.7,1428.9 1336.1,1428.9 1337.4,1438.2 1340.7,1440.2 1344.0,1444.2 1347.3,1438.9 1349.9,1438.9 1352.6,1445.5 1355.9,1449.4 1359.2,1445.5 1362.5,1446.1 1365.1,1444.8 1367.1,1447.5 1371.1,1436.9 1374.4,1439.5 1376.4,1446.1 1378.4,1443.5 1382.3,1440.8 1386.3,1435.6 1389.0,1428.9 1396.9,1417.0 1398.9,1413.1 1401.5,1416.4 1404.8,1416.4 1407.5,1419.7 1413.4,1414.4 1415.4,1418.4 1419.4,1411.8 1422.0,1407.8 1424.7,1396.5 1427.3,1380.7 1430.0,1375.2 1430.6,1372.1 1432.6,1359.3 1433.3,1356.9 1436.0,1347.4 1436.6,1346.3 1439.3,1328.9 1442.6,1322.3 1444.5,1314.4 1446.5,1307.1 1448.5,1308.4 1449.8,1313.1 1451.2,1308.4 1455.1,1313.1 1457.8,1325.6 1462.4,1328.9 1463.7,1325.6 1466.4,1343.5 1470.3,1352.1 1473.6,1362.0 1476.3,1367.9 1477.6,1364.6 1480.9,1380.5 1485.5,1391.8 1488.9,1391.8 1492.2,1394.4 1494.8,1393.7 1496.8,1391.8 1498.1,1395.1 1500.1,1391.1 1504.1,1395.1 1506.0,1405.0 1509.3,1416.9 1512.7,1416.9 1516.0,1426.1 1518.6,1428.1 1521.9,1420.2 1526.5,1416.2 1529.8,1428.1 1533.2,1431.4 1535.8,1437.4 1537.8,1442.7 1541.8,1430.8 1545.1,1442.7 1549.0,1442.0 1551.7,1444.6 1555.0,1448.6 1558.9,1449.9 1561.6,1446.6 1562.9,1447.3 1566.9,1437.4 1568.9,1442.7 1570.2,1441.3 1572.2,1445.3 1576.8,1446.0 1580.1,1449.9 1584.1,1453.2 1586.7,1447.3 1588.7,1448.0 1590.7,1434.7 1594.0,1444.6 1596.6,1444.6 1598.6,1448.6 1601.9,1440.0 1605.2,1444.0 1607.2,1443.3 1609.9,1434.7 1611.8,1434.7 1612.5,1440.0 1613.8,1436.1 1616.5,1438.7 1620.4,1440.0 1624.4,1444.6 1627.7,1444.0 1629.7,1438.7 1632.3,1442.7 1635.6,1440.7 1639.0,1443.3 1642.3,1430.1 1644.2,1429.4 1646.9,1445.3 1650.2,1451.9 1654.8,1457.9 1658.8,1457.9 1686.3,1440.0 1689.5,1444.8 1693.5,1444.8 1697.5,1450.3 1702.2,1454.3 1706.2,1449.5 1708.6,1450.3 1711.7,1435.2 1713.3,1434.4 1714.9,1441.6 1719.7,1444.0 1722.1,1441.6 1723.7,1452.7 1727.6,1447.1 1732.4,1442.4 1735.6,1440.0 1740.3,1437.6 1743.5,1442.4 1746.7,1443.2 1749.0,1451.9 1752.2,1454.3 1754.6,1455.1 1756.2,1455.1 1761.0,1469.4 1765.7,1465.4 1769.7,1462.2 1773.7,1456.7 1776.8,1452.7 1780.0,1456.7 1784.8,1455.1 1789.5,1464.6 1793.5,1463.8 1799.0,1474.9 1801.4,1468.6 1805.4,1467.0 1810.2,1453.5 1813.3,1447.1 1819.7,1445.6 1822.9,1446.3 1828.4,1441.6 1833.2,1436.8 1837.1,1432.9 1838.7,1432.9 1841.1,1425.7 1843.5,1436.8 1848.3,1446.3 1850.6,1443.2 1856.2,1444.8 1861.7,1434.4 1866.5,1430.5 1872.1,1434.4 1874.4,1430.5 1880.0,1428.9 1882.4,1437.6 1887.9,1437.6 1895.1,1445.6 1897.5,1436.8 1902.2,1428.9 1905.4,1426.5 1908.6,1428.1 1911.7,1425.7 1915.7,1436.8 1922.1,1440.0 1926.0,1432.1 1929.2,1430.5 1932.4,1421.0 1937.9,1413.0 1941.1,1411.4 1946.7,1403.5 1948.3,1397.1 1951.4,1386.0 1954.6,1378.1 1957.0,1375.7 1960.2,1363.8 1965.7,1361.4 1971.3,1356.7 1974.4,1344.8 1978.4,1336.8 1983.2,1324.1 1985.6,1305.1 1988.7,1286.0 1991.1,1275.7 1993.5,1277.3 1996.7,1287.6 1999.0,1297.1 2001.4,1316.2 2003.8,1340.0 2006.2,1352.7 2010.2,1368.6 2013.3,1367.0 2015.7,1384.4" fill="none" stroke="#555" stroke-width="2" stroke-linejoin="round"/>
<path d="M951.4,1453.0 952.6,1450.9 955.6,1453.6 957.4,1451.5 960.1,1452.4 962.7,1448.8 967.5,1433.6 969.9,1434.5 974.0,1434.5 976.4,1431.2 980.0,1426.8 982.9,1427.0 986.9,1431.6 988.9,1426.3 993.5,1427.0 996.1,1428.3 998.8,1419.0 1002.7,1419.0 1006.7,1422.3 1009.3,1419.7 1012.7,1422.3 1017.3,1416.4 1019.9,1414.4 1021.9,1417.0 1025.2,1409.8 1027.2,1403.2 1030.5,1405.1 1034.5,1395.2 1037.1,1382.0 1039.8,1380.0 1042.4,1382.7 1046.4,1367.4 1048.4,1356.9 1051.7,1335.7 1054.3,1335.0 1057.0,1339.0 1060.3,1335.7 1062.2,1339.7 1067.5,1355.5 1068.9,1364.8 1070.2,1372.1 1074.2,1380.7 1076.8,1380.7 1080.8,1398.5 1085.4,1408.4 1090.0,1395.2 1093.3,1401.8 1097.3,1403.2 1099.9,1414.4 1103.2,1409.8 1106.6,1410.4 1109.9,1392.6 1112.5,1384.6 1115.1,1374.1 1117.8,1346.3 1120.4,1310.6 1123.8,1232.4 1126.5,1215.2 1131.0,1183.5 1135.0,1149.0 1137.0,1133.5 1139.7,1137.2 1142.3,1166.3 1145.0,1225.8 1147.6,1259.0 1148.2,1300.0 1149.5,1323.8 1154.2,1335.7 1158.1,1352.9 1162.8,1374.1 1168.0,1395.2 1173.3,1412.4 1177.3,1427.6 1181.3,1431.6 1182.6,1430.3 1183.9,1431.6 1186.0,1436.9 1189.3,1435.6 1193.2,1438.2 1196.5,1434.2 1197.9,1427.6 1200.5,1431.6 1204.5,1425.0 1211.1,1425.0 1215.7,1432.2 1217.7,1440.8 1221.0,1448.1 1225.6,1454.1 1230.3,1447.5 1235.5,1452.7 1239.5,1452.1 1242.8,1453.4 1246.1,1450.1 1249.4,1449.4 1251.4,1444.8 1255.4,1443.5 1259.3,1442.2 1262.0,1443.5 1265.3,1438.2 1267.3,1440.2 1272.6,1435.6 1275.2,1438.2 1277.2,1440.8 1279.2,1440.2 1283.2,1442.8 1285.8,1440.2 1289.8,1438.2 1293.7,1440.2 1296.4,1440.2" fill="none" stroke="#f5b9b5" stroke-width="6" stroke-linejoin="round"/>
<path d="M951.4,1453.0 952.6,1450.9 955.6,1453.6 957.4,1451.5 960.1,1452.4 962.7,1448.8 967.5,1433.6 969.9,1434.5 974.0,1434.5 976.4,1431.2 980.0,1426.8 982.9,1427.0 986.9,1431.6 988.9,1426.3 993.5,1427.0 996.1,1428.3 998.8,1419.0 1002.7,1419.0 1006.7,1422.3 1009.3,1419.7 1012.7,1422.3 1017.3,1416.4 1019.9,1414.4 1021.9,1417.0 1025.2,1409.8 1027.2,1403.2 1030.5,1405.1 1034.5,1395.2 1037.1,1382.0 1039.8,1380.0 1042.4,1382.7 1046.4,1367.4 1048.4,1356.9 1051.7,1335.7 1054.3,1335.0 1057.0,1339.0 1060.3,1335.7 1062.2,1339.7 1067.5,1355.5 1068.9,1364.8 1070.2,1372.1 1074.2,1380.7 1076.8,1380.7 1080.8,1398.5 1085.4,1408.4 1090.0,1395.2 1093.3,1401.8 1097.3,1403.2 1099.9,1414.4 1103.2,1409.8 1106.6,1410.4 1109.9,1392.6 1112.5,1384.6 1115.1,1374.1 1117.8,1346.3 1120.4,1310.6 1123.8,1232.4 1126.5,1215.2 1131.0,1183.5 1135.0,1149.0 1137.0,1133.5 1139.7,1137.2 1142.3,1166.3 1145.0,1225.8 1147.6,1259.0 1148.2,1300.0 1149.5,1323.8 1154.2,1335.7 1158.1,1352.9 1162.8,1374.1 1168.0,1395.2 1173.3,1412.4 1177.3,1427.6 1181.3,1431.6 1182.6,1430.3 1183.9,1431.6 1186.0,1436.9 1189.3,1435.6 1193.2,1438.2 1196.5,1434.2 1197.9,1427.6 1200.5,1431.6 1204.5,1425.0 1211.1,1425.0 1215.7,1432.2 1217.7,1440.8 1221.0,1448.1 1225.6,1454.1 1230.3,1447.5 1235.5,1452.7 1239.5,1452.1 1242.8,1453.4 1246.1,1450.1 1249.4,1449.4 1251.4,1444.8 1255.4,1443.5 1259.3,1442.2 1262.0,1443.5 1265.3,1438.2 1267.3,1440.2 1272.6,1435.6 1275.2,1438.2 1277.2,1440.8 1279.2,1440.2 1283.2,1442.8 1285.8,1440.2 1289.8,1438.2 1293.7,1440.2 1296.4,1440.2" fill="none" stroke="#e2463e" stroke-width="2.6" stroke-linejoin="round"/>
<rect x="694" y="1050" width="4" height="500" fill="#b95a26"/>
<path d="M693.3,1044 L698.7,1044 L704.6,1054 L696,1066 L687.4,1054Z M696,1532.5 L704.6,1543.8 L698.7,1554 L693.3,1554 L687.4,1543.8Z" fill="#b95a26"/>
<text x="710" y="1082" font-family="Liberation Sans" font-weight="bold" font-size="24" fill="#b95a26">1.6037e+04 Angstrom</text>
</svg>

<!-- right panel -->
<div class="a" style="left:2038px;top:122px;width:10px;height:1548px;background:#e2e4e8"></div>
<div class="a" style="left:2048px;top:134px;width:650px;height:24px;background:#e4e4e4"></div>
<div class="a" style="left:2048px;top:158px;width:650px;height:1512px;background:#fff"></div>
<div class="a" style="left:2620px;top:359px;width:30px;height:30px;border-radius:50%;background:#a83c2e;border:2px solid #0c0c0c"></div>
<div class="a" style="left:2295px;top:551px;width:30px;height:30px;border-radius:50%;background:#a83c2e;border:2px solid #0c0c0c"></div>

<svg class="a" style="left:0;top:0" width="2698" height="1670">
<polygon points="54.4,78 94,38.2 94,78" fill="#d6352b"/>
<text x="114.8" y="67" font-size="26.2" fill="#fff">Subset 1</text>
<g fill="#fff">
<g transform="translate(430,62) rotate(45)"><rect x="-3.3" y="-13" width="6.6" height="25" rx="1"/></g>
</g>
<g transform="translate(430,62) rotate(45)"><rect x="-1.6" y="-10.5" width="3.2" height="3.2" fill="#22364a"/></g>
<g transform="translate(428,47.7) rotate(45)"><path d="M0,-3.4 Q0.7,-0.7 3.4,0 Q0.7,0.7 0,3.4 Q-0.7,0.7 -3.4,0 Q-0.7,-0.7 0,-3.4Z" fill="#fff"/></g>
<g transform="translate(444,47.7) rotate(45)"><path d="M0,-3.4 Q0.7,-0.7 3.4,0 Q0.7,0.7 0,3.4 Q-0.7,0.7 -3.4,0 Q-0.7,-0.7 0,-3.4Z" fill="#fff"/></g>
<g transform="translate(444,63.7) rotate(45)"><path d="M0,-3.4 Q0.7,-0.7 3.4,0 Q0.7,0.7 0,3.4 Q-0.7,0.7 -3.4,0 Q-0.7,-0.7 0,-3.4Z" fill="#fff"/></g>
<text x="481.5" y="66" font-size="25.5" fill="#fff">auto</text>
<rect x="2468" y="39.8" width="36" height="36.2" rx="5" fill="#fff"/>
<text x="2486" y="70" font-size="30" font-weight="bold" fill="#22364a" text-anchor="middle">?</text>
<path d="M2566,39.8 H2598 Q2602,39.8 2602,43.8 V80 L2593.7,72.3 H2566 Q2562,72.3 2562,68.3 V43.8 Q2562,39.8 2566,39.8Z" fill="#fff"/>
<g fill="#22364a"><rect x="2570" y="47.9" width="24" height="3.9"/><rect x="2570" y="54.2" width="24" height="3.7"/><rect x="2570" y="60.1" width="24" height="3.8"/></g>
<g fill="#fff"><rect x="2660" y="45.9" width="36.5" height="4.1"/><rect x="2660" y="55.9" width="36.5" height="4.1"/><rect x="2660" y="65.9" width="36.5" height="4.1"/></g>
<g font-size="24" fill="#777">
<text x="66.3" y="152.2">flux-viewer</text>
<text x="1092" y="152.2">uncert-viewer</text>
<text x="66.3" y="934">spectrum-viewer</text>
</g>
<g fill="none" stroke="#949494"><rect x="980" y="132" width="16" height="16" stroke-width="2"/><path d="M979,133.3 H997" stroke-width="3"/></g>
<g fill="none" stroke="#949494"><rect x="2004" y="132" width="16" height="16" stroke-width="2"/><path d="M2003,133.3 H2021" stroke-width="3"/></g>
<g fill="none" stroke="#949494"><rect x="2004" y="914" width="16" height="16" stroke-width="2"/><path d="M2003,915.3 H2021" stroke-width="3"/></g>
<rect x="20" y="188" width="8" height="8" fill="#fff"/><rect x="32" y="190" width="24" height="4" fill="#fff"/><rect x="20" y="200" width="8" height="8" fill="#fff"/><rect x="32" y="202" width="24" height="4" fill="#fff"/><rect x="20" y="212" width="8" height="8" fill="#fff"/><rect x="32" y="214" width="24" height="4" fill="#fff"/>
<polygon transform="translate(621.8,186)" points="20,0 40,18 34.2,18 34.2,34 24,34 24,22 16,22 16,34 5.8,34 5.8,18 0,18" fill="#d7dee4"/><polygon points="676.8,225.5 676.8,235 667.3,235" fill="#d7dee4"/><g transform="translate(0.0,0)" fill="none" stroke="#d7dee4"><path d="M717.5,188.8 V184.9 H740.1 V208.8" stroke-width="3.5"/><circle cx="724.2" cy="201" r="9.4" stroke-width="3.2"/><path d="M717.8,208.5 L705,220.8" stroke-width="4.6"/><rect x="720" y="202" width="16" height="16" fill="#315c72" stroke="none"/><rect x="726" y="208" width="16" height="16" fill="#315c72" stroke="none"/><path d="M734,206.8 V205 Q734,204.5 733,204.5 H723.5 Q722.5,204.5 722.5,205.5 V215 Q722.5,216 723.5,216 H733 Q734,216 734,215 V212.8" stroke-width="1.9"/><path d="M727.6,213.6 V211 Q727.6,210.1 728.6,210.1 H738.2 Q739.2,210.1 739.2,211.1 V220.5 Q739.2,221.4 738.2,221.4 H728.6 Q727.6,221.4 727.6,220.5 V219" stroke-width="1.9"/></g><polygon points="756.8,225.5 756.8,235 747.3,235" fill="#d7dee4"/><g transform="translate(0,0)" fill="#d7dee4"><circle cx="806.4" cy="207" r="11.8"/><circle cx="791.8" cy="191" r="3"/><circle cx="800.5" cy="188.5" r="3"/><circle cx="788.5" cy="212.8" r="3"/><circle cx="808.6" cy="204" r="2.4" fill="#315c72"/><circle cx="804.7" cy="211.2" r="2.4" fill="#315c72"/></g><polygon points="837,225.5 837,235 827.5,235" fill="#d7dee4"/><g transform="translate(0.0,0)" fill="none" stroke="#d7dee4" stroke-width="1.8"><rect x="866.4" y="205" width="6.6" height="6.8"/><path d="M873,208.4 H876 C878.3,208.4 878,200.5 878.8,200.5 C879.8,200.5 879.3,209.1 883,209.1 C887,209.1 887.6,191.6 888.6,191.6 C889.8,191.6 890.3,208.7 893.4,208.7 C895,208.7 895,202.8 895.8,202.8 C896.6,202.8 896.3,208.5 898.5,208.5 H902.4"/></g><g fill="#d7dee4"><rect x="947" y="192" width="16.9" height="4"/><rect x="967.2" y="192" width="9.8" height="4"/><rect x="967.2" y="189" width="2.9" height="10"/><rect x="947" y="202" width="6.9" height="4"/><rect x="953.7" y="199" width="3.2" height="10"/><rect x="960.2" y="202" width="16.8" height="4"/><rect x="947" y="212" width="9.9" height="4"/><rect x="960.2" y="209.3" width="3.7" height="9.5"/><rect x="960.2" y="212" width="16.8" height="4"/></g><polygon points="997,225.5 997,235 987.5,235" fill="#d7dee4"/>
<g transform="translate(1026,0)"><rect x="20" y="188" width="8" height="8" fill="#fff"/><rect x="32" y="190" width="24" height="4" fill="#fff"/><rect x="20" y="200" width="8" height="8" fill="#fff"/><rect x="32" y="202" width="24" height="4" fill="#fff"/><rect x="20" y="212" width="8" height="8" fill="#fff"/><rect x="32" y="214" width="24" height="4" fill="#fff"/></g>
<polygon transform="translate(1646,186)" points="20,0 40,18 34.2,18 34.2,34 24,34 24,22 16,22 16,34 5.8,34 5.8,18 0,18" fill="#d7dee4"/><polygon points="1701,225.5 1701,235 1691.5,235" fill="#d7dee4"/><g transform="translate(1024.2,0)" fill="none" stroke="#d7dee4"><path d="M717.5,188.8 V184.9 H740.1 V208.8" stroke-width="3.5"/><circle cx="724.2" cy="201" r="9.4" stroke-width="3.2"/><path d="M717.8,208.5 L705,220.8" stroke-width="4.6"/><rect x="720" y="202" width="16" height="16" fill="#315c72" stroke="none"/><rect x="726" y="208" width="16" height="16" fill="#315c72" stroke="none"/><path d="M734,206.8 V205 Q734,204.5 733,204.5 H723.5 Q722.5,204.5 722.5,205.5 V215 Q722.5,216 723.5,216 H733 Q734,216 734,215 V212.8" stroke-width="1.9"/><path d="M727.6,213.6 V211 Q727.6,210.1 728.6,210.1 H738.2 Q739.2,210.1 739.2,211.1 V220.5 Q739.2,221.4 738.2,221.4 H728.6 Q727.6,221.4 727.6,220.5 V219" stroke-width="1.9"/></g><polygon points="1781,225.5 1781,235 1771.5,235" fill="#d7dee4"/><g transform="translate(1024,0)" fill="#d7dee4"><circle cx="806.4" cy="207" r="11.8"/><circle cx="791.8" cy="191" r="3"/><circle cx="800.5" cy="188.5" r="3"/><circle cx="788.5" cy="212.8" r="3"/><circle cx="808.6" cy="204" r="2.4" fill="#315c72"/><circle cx="804.7" cy="211.2" r="2.4" fill="#315c72"/></g><polygon points="1861,225.5 1861,235 1851.5,235" fill="#d7dee4"/><g transform="translate(1023.3,0)" fill="none" stroke="#d7dee4" stroke-width="1.8"><rect x="866.4" y="205" width="6.6" height="6.8"/><path d="M873,208.4 H876 C878.3,208.4 878,200.5 878.8,200.5 C879.8,200.5 879.3,209.1 883,209.1 C887,209.1 887.6,191.6 888.6,191.6 C889.8,191.6 890.3,208.7 893.4,208.7 C895,208.7 895,202.8 895.8,202.8 C896.6,202.8 896.3,208.5 898.5,208.5 H902.4"/></g><g fill="#d7dee4"><rect x="1971" y="192" width="16.9" height="4"/><rect x="1991.2" y="192" width="9.8" height="4"/><rect x="1991.2" y="189" width="2.9" height="10"/><rect x="1971" y="202" width="6.9" height="4"/><rect x="1977.7" y="199" width="3.2" height="10"/><rect x="1984.2" y="202" width="16.8" height="4"/><rect x="1971" y="212" width="9.9" height="4"/><rect x="1984.2" y="209.3" width="3.7" height="9.5"/><rect x="1984.2" y="212" width="16.8" height="4"/></g><polygon points="2021,225.5 2021,235 2011.5,235" fill="#d7dee4"/>
<rect x="20" y="970" width="8" height="8" fill="#fff"/><rect x="32" y="972" width="24" height="4" fill="#fff"/><rect x="20" y="982" width="8" height="8" fill="#fff"/><rect x="32" y="984" width="24" height="4" fill="#fff"/><rect x="20" y="994" width="8" height="8" fill="#fff"/><rect x="32" y="996" width="24" height="4" fill="#fff"/>
<polygon transform="translate(1566,968)" points="20,0 40,18 34.2,18 34.2,34 24,34 24,22 16,22 16,34 5.8,34 5.8,18 0,18" fill="#d7dee4"/><polygon points="1621,1007.5 1621,1017 1611.5,1017" fill="#d7dee4"/><polygon points="1701,1007.5 1701,1017 1691.5,1017" fill="#d7dee4"/><polygon points="1781,1007.5 1781,1017 1771.5,1017" fill="#d7dee4"/><g fill="#d7dee4"><rect x="1971" y="974" width="16.9" height="4"/><rect x="1991.2" y="974" width="9.8" height="4"/><rect x="1991.2" y="971" width="2.9" height="10"/><rect x="1971" y="984" width="6.9" height="4"/><rect x="1977.7" y="981" width="3.2" height="10"/><rect x="1984.2" y="984" width="16.8" height="4"/><rect x="1971" y="994" width="9.9" height="4"/><rect x="1984.2" y="991.3" width="3.7" height="9.5"/><rect x="1984.2" y="994" width="16.8" height="4"/></g><polygon points="2021,1007.5 2021,1017 2011.5,1017" fill="#d7dee4"/>
<g fill="none" stroke="#d7dee4"><circle cx="1667.6" cy="984.4" r="10" stroke-width="3.3"/><path d="M1660,991.8 L1648,1003.5" stroke-width="4.6"/><path d="M1661.3,972 V967.5 H1684.5 V992 M1681,990.5 H1686" stroke-width="3.1"/></g>
<g fill="none" stroke="#d7dee4" stroke-width="3.6"><path d="M1728.5,986 H1763"/><path d="M1734.5,980 L1728.5,986 L1734.5,992 M1757,980 L1763,986 L1757,992"/></g>
<g fill="#d7dee4"><rect x="1821" y="965" width="14.8" height="42"/><circle cx="1813.8" cy="995.8" r="3"/><circle cx="1842.3" cy="988" r="3"/><circle cx="1828.4" cy="979.7" r="2.5" fill="#315c72"/></g>
<g fill="#fff"><polygon points="1914.4,971 1926,986 1914.4,1000.8 1903,986"/><polygon points="1902.2,972 1902.2,999.7 1890.8,986"/><polygon points="1906.3,966 1910,969.5 1906.3,973 1902.6,969.5"/><polygon points="1906.3,999 1910,1002.5 1906.3,1006 1902.6,1002.5"/></g><path d="M1906.3,971 L1907.5,976 L1900,986 L1907.5,996 L1906.3,1001" fill="none" stroke="#fff" stroke-width="1.3"/>
<g font-weight="bold" font-size="31" text-anchor="middle">
<text x="987.5" y="277" fill="#151515">1</text><text x="988.3" y="325" fill="#d5362b">B</text><text x="987.7" y="373" fill="#151515">A</text>
<text x="2012" y="277" fill="#151515">2</text>
<text x="2012" y="1058.5" fill="#151515">3</text><text x="2012" y="1106.5" fill="#d5362b">B</text><text x="2012" y="1154.5" fill="#555">A</text>
</g>
<rect x="1991.7" y="1114" width="40" height="5.7" fill="#d5362b"/><rect x="1991.7" y="1165.5" width="40" height="2.5" fill="#555"/>
<text x="2072" y="205.7" font-size="24" fill="#6b6b6b">Tools for selecting and interacting with subsets.</text>
<text x="2072" y="230" font-size="22.6" font-weight="bold" fill="#a8591f">Learn More</text>
<g fill="none" stroke="#a8591f" stroke-width="2"><path d="M2211,215 H2204 V232 H2221 V225"/><path d="M2213,215 H2221 V223 M2221,215 L2210,226"/></g>
<text x="2072" y="330.7" font-size="23" fill="#6b6b6b">Subset</text>
<g fill="none" stroke="#d6352b"><path d="M2077.5,340 V377.9 H2116" stroke-width="3.9"/><path d="M2078.9,371.8 L2079.8,371.6 L2080.7,371.2 L2081.6,370.7 L2082.6,370.1 L2083.5,369.2 L2084.4,368.3 L2085.3,367.1 L2086.2,365.6 L2087.1,364.0 L2088.1,362.2 L2089.0,360.2 L2089.9,358.1 L2090.8,356.0 L2091.7,353.8 L2092.6,351.8 L2093.5,349.9 L2094.5,348.4 L2095.4,347.2 L2096.3,346.4 L2097.2,346.0 L2098.1,346.1 L2099.0,346.8 L2099.9,347.8 L2100.9,349.2 L2101.8,351.0 L2102.7,352.9 L2103.6,355.0 L2104.5,357.2 L2105.4,359.3 L2106.3,361.4 L2107.3,363.2 L2108.2,365.0 L2109.1,366.5 L2110.0,367.8 L2110.9,368.8 L2111.8,369.7 L2112.8,370.4 L2113.7,371.0 L2114.6,371.4 L2115.5,371.7" stroke-width="3.6" stroke-linejoin="round"/></g>
<text x="2144.3" y="368" font-size="30.5" fill="#222">Subset 1</text>
<polygon points="2540,359.4 2559,359.4 2549.5,369.8" fill="#777"/>
<rect x="2072" y="388" width="502" height="2" fill="#8a8a8a"/>
<text x="2072" y="423.6" font-size="23.2" fill="#6b6b6b">Select subset to edit.</text>
<text x="2072" y="537" font-size="29.5" font-weight="bold" fill="#6b6b6b">Subregion 0</text>
<rect x="2270.6" y="527" width="379.4" height="2" fill="#d0d0d0"/>
<text x="2072" y="585.8" font-size="25.8" fill="#222">Range applied with</text>
<text x="2337.6" y="585.8" font-size="25.8" fill="#222">replace mode</text>
<text x="2072" y="635.5" font-size="23.5" fill="#6b6b6b">Lower bound</text>
<text x="2072" y="679.8" font-size="31" fill="#222">16300</text>
<text x="2674" y="679.8" font-size="31" fill="#222" text-anchor="end">A</text>
<rect x="2072" y="701" width="602" height="2" fill="#8a8a8a"/>
<text x="2072" y="767.3" font-size="23.5" fill="#6b6b6b">Upper bound</text>
<text x="2072" y="812" font-size="31" fill="#222">16650</text>
<text x="2674" y="812" font-size="31" fill="#222" text-anchor="end">A</text>
<rect x="2072" y="833" width="602" height="2" fill="#8a8a8a"/>
<text x="2291" y="947.3" font-size="27" letter-spacing="2" fill="#bdbdbd">SIMPLIFY</text>
<text x="2499.8" y="947.3" font-size="27" font-weight="bold" letter-spacing="1" fill="#b95a26">UPDATE</text>
<text x="2096.5" y="1111.7" font-size="29.5" fill="#222">Markers</text>
<path d="M2615.5,1096.2 L2625.5,1106.2 L2635.5,1096.2" fill="none" stroke="#777" stroke-width="3.4"/>
<text x="2096.5" y="1207.6" font-size="29.5" fill="#222">Slice</text>
<path d="M2615.5,1192.1 L2625.5,1202.1 L2635.5,1192.1" fill="none" stroke="#777" stroke-width="3.4"/>
<text x="2096.5" y="1303.5" font-size="29.5" fill="#222">Gaussian Smooth</text>
<path d="M2615.5,1288.0 L2625.5,1298.0 L2635.5,1288.0" fill="none" stroke="#777" stroke-width="3.4"/>
<text x="2096.5" y="1399.4" font-size="29.5" fill="#222">Collapse</text>
<path d="M2615.5,1383.9 L2625.5,1393.9 L2635.5,1383.9" fill="none" stroke="#777" stroke-width="3.4"/>
<text x="2096.5" y="1495.3" font-size="29.5" fill="#222">Model Fitting</text>
<path d="M2615.5,1479.8 L2625.5,1489.8 L2635.5,1479.8" fill="none" stroke="#777" stroke-width="3.4"/>
<text x="2096.5" y="1591.2" font-size="29.5" fill="#222">Line Lists</text>
<path d="M2615.5,1575.7 L2625.5,1585.7 L2635.5,1575.7" fill="none" stroke="#777" stroke-width="3.4"/>
<text x="2096.5" y="1687.1" font-size="29.5" fill="#222">Line Analysis</text>
<path d="M2615.5,1671.6 L2625.5,1681.6 L2635.5,1671.6" fill="none" stroke="#777" stroke-width="3.4"/>
</svg>
</body></html>
